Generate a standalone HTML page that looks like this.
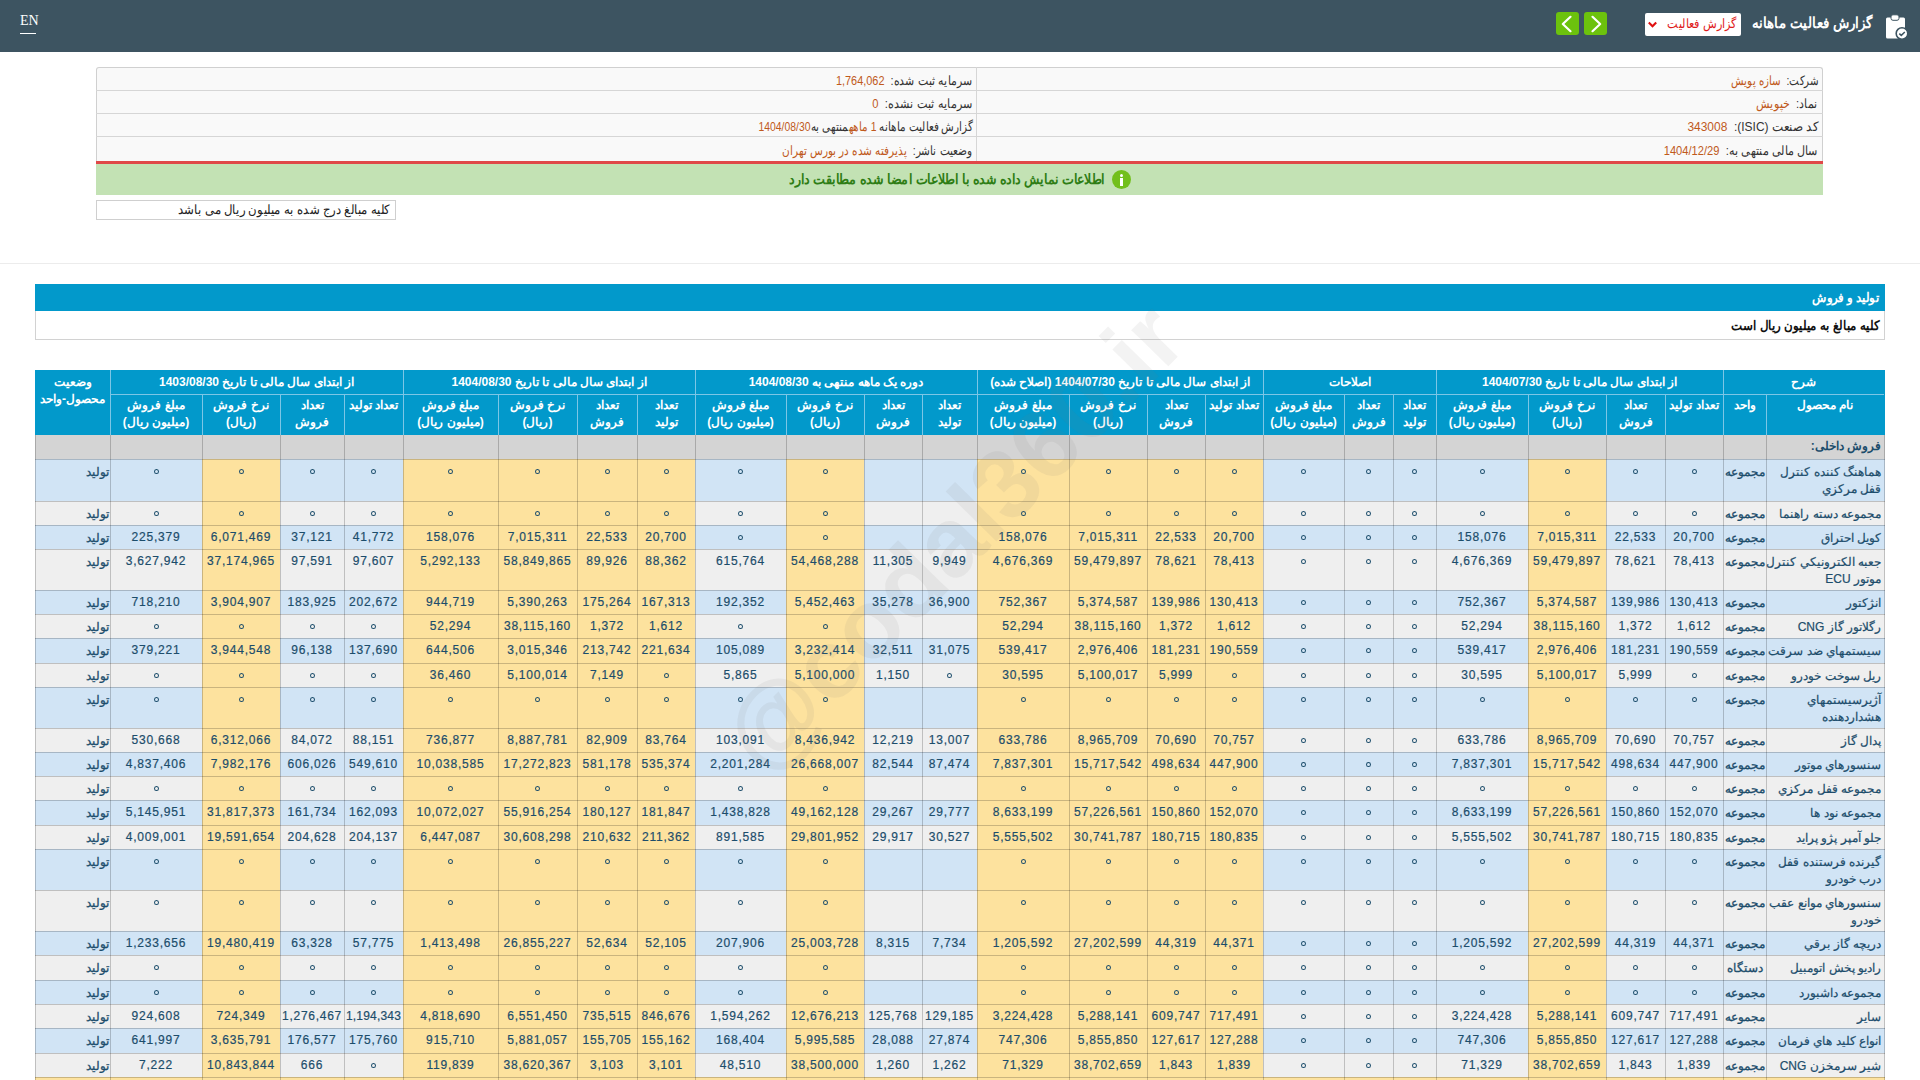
<!DOCTYPE html>
<html lang="fa"><head><meta charset="utf-8">
<style>
html,body{margin:0;padding:0;width:1920px;height:1080px;overflow:hidden;background:#fff;}
body{position:relative;font-family:"Liberation Sans",sans-serif;font-size:12px;color:#333;}
div{position:absolute;white-space:nowrap;}
.r{direction:rtl}
.f{display:inline-block;transform-origin:100% 50%;white-space:nowrap}
.f.c{transform-origin:50% 50%}
</style></head><body>
<div class="r" style="left:0;top:0;width:1920px;height:1080px">
<div style="left:0;top:0;width:1920px;height:52px;background:#3d5461"></div>
<div style="left:20px;top:12px;font-family:'Liberation Serif',serif;font-size:14px;color:#fff;line-height:18px">EN</div>
<div style="left:20px;top:33px;width:16px;height:1px;background:#fff"></div>
<div style="left:1556px;top:12px;width:23px;height:23px;background:#6cc20d;border-radius:3px"><svg width="23" height="23" viewBox="0 0 23 23"><path d="M14.5 4.8 L6.8 12 L14.5 19.2" fill="none" stroke="#fff" stroke-width="2.2" stroke-linecap="round" stroke-linejoin="round"/></svg></div>
<div style="left:1584px;top:12px;width:23px;height:23px;background:#6cc20d;border-radius:3px"><svg width="23" height="23" viewBox="0 0 23 23"><path d="M8.5 4.8 L16.2 12 L8.5 19.2" fill="none" stroke="#fff" stroke-width="2.2" stroke-linecap="round" stroke-linejoin="round"/></svg></div>
<div style="left:1645px;top:13px;width:96px;height:23px;background:#fff;border-radius:2px"></div>
<div style="left:1647px;top:19px"><svg width="11" height="10" viewBox="0 0 11 10"><path d="M1.8 2.5 L5.5 6.3 L9.2 2.5" fill="none" stroke="#e01010" stroke-width="2.1"/></svg></div>
<div class="r" style="left:1662px;top:15px;width:74px;text-align:right;color:#e01b1b;font-size:12.5px;line-height:18px"><span class="f">گزارش فعالیت</span></div>
<div class="r" style="left:1740px;top:13px;width:132px;text-align:right;color:#fff;font-size:14.5px;font-weight:bold;line-height:20px"><span class="f">گزارش فعالیت ماهانه</span></div>
<div style="left:1884px;top:13px"><svg width="26" height="28" viewBox="0 0 26 28"><rect x="2" y="4.5" width="19" height="21" rx="1.5" fill="#fff"/><rect x="7" y="1.8" width="8" height="5.5" rx="2" fill="#fff" stroke="#3d5461" stroke-width="1"/><circle cx="18" cy="20.5" r="5.8" fill="#fff" stroke="#3d5461" stroke-width="1.6"/><path d="M15.3 20.6 L17.3 22.4 L20.8 19" fill="none" stroke="#3d5461" stroke-width="1.5"/></svg></div>
<div style="left:96px;top:67px;width:1727px;height:94px;background:#f9f9f9;border:1px solid #d0d0d0;border-bottom:none;border-radius:3px 3px 0 0;box-sizing:border-box"></div>
<div style="left:96px;top:90px;width:1727px;height:1px;background:#d6d6d6"></div>
<div style="left:96px;top:113px;width:1727px;height:1px;background:#d6d6d6"></div>
<div style="left:96px;top:136px;width:1727px;height:1px;background:#d6d6d6"></div>
<div style="left:976px;top:67px;width:1px;height:94px;background:#d6d6d6"></div>
<div class="r" style="left:980px;top:71.0px;width:838px;text-align:right;font-size:13px;line-height:20px"><span class="f">شرکت: &nbsp;<span style="color:#c05a1c">سازه پویش</span></span></div>
<div class="r" style="left:980px;top:94.2px;width:838px;text-align:right;font-size:13px;line-height:20px"><span class="f">نماد: &nbsp;<span style="color:#c05a1c">خپویش</span></span></div>
<div class="r" style="left:980px;top:117.4px;width:838px;text-align:right;font-size:13px;line-height:20px"><span class="f">کد صنعت (ISIC): &nbsp;<span style="color:#c05a1c">343008</span></span></div>
<div class="r" style="left:980px;top:140.6px;width:838px;text-align:right;font-size:13px;line-height:20px"><span class="f">سال مالی منتهی به: &nbsp;<span style="color:#c05a1c">1404/12/29</span></span></div>
<div class="r" style="left:100px;top:71.0px;width:872px;text-align:right;font-size:13px;line-height:20px"><span class="f">سرمایه ثبت شده: &nbsp;<span style="color:#c05a1c">1,764,062</span></span></div>
<div class="r" style="left:100px;top:94.2px;width:872px;text-align:right;font-size:13px;line-height:20px"><span class="f">سرمایه ثبت نشده: &nbsp;<span style="color:#c05a1c">0</span></span></div>
<div class="r" style="left:100px;top:117.4px;width:872px;text-align:right;font-size:13px;line-height:20px"><span class="f">گزارش فعالیت ماهانه <span style="color:#c05a1c">1 ماهه</span>منتهی به<span style="color:#c05a1c">1404/08/30</span></span></div>
<div class="r" style="left:100px;top:140.6px;width:872px;text-align:right;font-size:13px;line-height:20px"><span class="f">وضعیت ناشر: &nbsp;<span style="color:#c05a1c">پذیرفته شده در بورس تهران</span></span></div>
<div style="left:96px;top:161px;width:1727px;height:3px;background:#e04848"></div>
<div style="left:96px;top:164px;width:1727px;height:31px;background:#c3e2b4"></div>
<div class="r" style="left:700px;top:169px;width:405px;text-align:right;color:#2e7d14;font-size:14px;font-weight:bold;line-height:20px"><span class="f">اطلاعات نمایش داده شده با اطلاعات امضا شده مطابقت دارد</span></div>
<div style="left:1112px;top:170px;width:19px;height:19px;border-radius:50%;background:#72bf1c"></div>
<div style="left:1120px;top:174px;width:3px;height:3px;background:#fff;border-radius:50%"></div>
<div style="left:1120px;top:178px;width:3px;height:8px;background:#fff"></div>
<div style="left:96px;top:200px;width:300px;height:20px;border:1px solid #cfcfcf;box-sizing:border-box"></div>
<div class="r" style="left:100px;top:200px;width:290px;text-align:right;font-size:13px;color:#222;line-height:20px"><span class="f">کلیه مبالغ درج شده به میلیون ریال می باشد</span></div>
<div style="left:0;top:263px;width:1920px;height:1px;background:#ececec"></div>
<div style="left:35px;top:284px;width:1850px;height:27px;background:#0299cb"></div>
<div class="r" style="left:40px;top:288px;width:1839px;text-align:right;color:#fff;font-weight:bold;font-size:13px;line-height:20px"><span class="f">تولید و فروش</span></div>
<div style="left:35px;top:311px;width:1850px;height:29px;border:1px solid #d2d2d2;border-top:none;box-sizing:border-box;background:#fff"></div>
<div class="r" style="left:40px;top:316px;width:1839px;text-align:right;color:#111;font-weight:bold;font-size:13px;line-height:20px"><span class="f">کلیه مبالغ به میلیون ریال است</span></div>
<div style="left:35px;top:370px;width:1850px;height:65px;background:#0299cb"></div>
<div style="left:35px;top:370px;width:75px;height:65px;color:#fff;font-weight:bold;text-align:center;line-height:17px;box-sizing:border-box;overflow:hidden;display:flex;flex-direction:column;align-items:center;padding-top:4px"><span class="f c">وضعیت</span><span class="f c">محصول-واحد</span></div>
<div style="left:110px;top:370px;width:293px;height:24px;color:#fff;font-weight:bold;text-align:center;line-height:17px;box-sizing:border-box;overflow:hidden;display:flex;flex-direction:column;align-items:center;padding-top:4px"><span class="f c">از ابتدای سال مالی تا تاریخ 1403/08/30</span></div>
<div style="left:403px;top:370px;width:292px;height:24px;color:#fff;font-weight:bold;text-align:center;line-height:17px;box-sizing:border-box;overflow:hidden;display:flex;flex-direction:column;align-items:center;padding-top:4px"><span class="f c">از ابتدای سال مالی تا تاریخ 1404/08/30</span></div>
<div style="left:695px;top:370px;width:282px;height:24px;color:#fff;font-weight:bold;text-align:center;line-height:17px;box-sizing:border-box;overflow:hidden;display:flex;flex-direction:column;align-items:center;padding-top:4px"><span class="f c">دوره یک ماهه منتهی به 1404/08/30</span></div>
<div style="left:977px;top:370px;width:286px;height:24px;color:#fff;font-weight:bold;text-align:center;line-height:17px;box-sizing:border-box;overflow:hidden;display:flex;flex-direction:column;align-items:center;padding-top:4px"><span class="f c">از ابتدای سال مالی تا تاریخ 1404/07/30 (اصلاح شده)</span></div>
<div style="left:1263px;top:370px;width:173px;height:24px;color:#fff;font-weight:bold;text-align:center;line-height:17px;box-sizing:border-box;overflow:hidden;display:flex;flex-direction:column;align-items:center;padding-top:4px"><span class="f c">اصلاحات</span></div>
<div style="left:1436px;top:370px;width:287px;height:24px;color:#fff;font-weight:bold;text-align:center;line-height:17px;box-sizing:border-box;overflow:hidden;display:flex;flex-direction:column;align-items:center;padding-top:4px"><span class="f c">از ابتدای سال مالی تا تاریخ 1404/07/30</span></div>
<div style="left:1723px;top:370px;width:161px;height:24px;color:#fff;font-weight:bold;text-align:center;line-height:17px;box-sizing:border-box;overflow:hidden;display:flex;flex-direction:column;align-items:center;padding-top:4px"><span class="f c">شرح</span></div>
<div style="left:110px;top:394px;width:92px;height:41px;color:#fff;font-weight:bold;text-align:center;line-height:17px;box-sizing:border-box;overflow:hidden;display:flex;flex-direction:column;align-items:center;padding-top:3px"><span class="f c">مبلغ فروش</span><span class="f c">(میلیون ریال)</span></div>
<div style="left:202px;top:394px;width:78px;height:41px;color:#fff;font-weight:bold;text-align:center;line-height:17px;box-sizing:border-box;overflow:hidden;display:flex;flex-direction:column;align-items:center;padding-top:3px"><span class="f c">نرخ فروش</span><span class="f c">(ریال)</span></div>
<div style="left:280px;top:394px;width:64px;height:41px;color:#fff;font-weight:bold;text-align:center;line-height:17px;box-sizing:border-box;overflow:hidden;display:flex;flex-direction:column;align-items:center;padding-top:3px"><span class="f c">تعداد</span><span class="f c">فروش</span></div>
<div style="left:344px;top:394px;width:59px;height:41px;color:#fff;font-weight:bold;text-align:center;line-height:17px;box-sizing:border-box;overflow:hidden;display:flex;flex-direction:column;align-items:center;padding-top:3px"><span class="f c">تعداد تولید</span></div>
<div style="left:403px;top:394px;width:95px;height:41px;color:#fff;font-weight:bold;text-align:center;line-height:17px;box-sizing:border-box;overflow:hidden;display:flex;flex-direction:column;align-items:center;padding-top:3px"><span class="f c">مبلغ فروش</span><span class="f c">(میلیون ریال)</span></div>
<div style="left:498px;top:394px;width:79px;height:41px;color:#fff;font-weight:bold;text-align:center;line-height:17px;box-sizing:border-box;overflow:hidden;display:flex;flex-direction:column;align-items:center;padding-top:3px"><span class="f c">نرخ فروش</span><span class="f c">(ریال)</span></div>
<div style="left:577px;top:394px;width:60px;height:41px;color:#fff;font-weight:bold;text-align:center;line-height:17px;box-sizing:border-box;overflow:hidden;display:flex;flex-direction:column;align-items:center;padding-top:3px"><span class="f c">تعداد</span><span class="f c">فروش</span></div>
<div style="left:637px;top:394px;width:58px;height:41px;color:#fff;font-weight:bold;text-align:center;line-height:17px;box-sizing:border-box;overflow:hidden;display:flex;flex-direction:column;align-items:center;padding-top:3px"><span class="f c">تعداد</span><span class="f c">تولید</span></div>
<div style="left:695px;top:394px;width:91px;height:41px;color:#fff;font-weight:bold;text-align:center;line-height:17px;box-sizing:border-box;overflow:hidden;display:flex;flex-direction:column;align-items:center;padding-top:3px"><span class="f c">مبلغ فروش</span><span class="f c">(میلیون ریال)</span></div>
<div style="left:786px;top:394px;width:78px;height:41px;color:#fff;font-weight:bold;text-align:center;line-height:17px;box-sizing:border-box;overflow:hidden;display:flex;flex-direction:column;align-items:center;padding-top:3px"><span class="f c">نرخ فروش</span><span class="f c">(ریال)</span></div>
<div style="left:864px;top:394px;width:58px;height:41px;color:#fff;font-weight:bold;text-align:center;line-height:17px;box-sizing:border-box;overflow:hidden;display:flex;flex-direction:column;align-items:center;padding-top:3px"><span class="f c">تعداد</span><span class="f c">فروش</span></div>
<div style="left:922px;top:394px;width:55px;height:41px;color:#fff;font-weight:bold;text-align:center;line-height:17px;box-sizing:border-box;overflow:hidden;display:flex;flex-direction:column;align-items:center;padding-top:3px"><span class="f c">تعداد</span><span class="f c">تولید</span></div>
<div style="left:977px;top:394px;width:92px;height:41px;color:#fff;font-weight:bold;text-align:center;line-height:17px;box-sizing:border-box;overflow:hidden;display:flex;flex-direction:column;align-items:center;padding-top:3px"><span class="f c">مبلغ فروش</span><span class="f c">(میلیون ریال)</span></div>
<div style="left:1069px;top:394px;width:78px;height:41px;color:#fff;font-weight:bold;text-align:center;line-height:17px;box-sizing:border-box;overflow:hidden;display:flex;flex-direction:column;align-items:center;padding-top:3px"><span class="f c">نرخ فروش</span><span class="f c">(ریال)</span></div>
<div style="left:1147px;top:394px;width:58px;height:41px;color:#fff;font-weight:bold;text-align:center;line-height:17px;box-sizing:border-box;overflow:hidden;display:flex;flex-direction:column;align-items:center;padding-top:3px"><span class="f c">تعداد</span><span class="f c">فروش</span></div>
<div style="left:1205px;top:394px;width:58px;height:41px;color:#fff;font-weight:bold;text-align:center;line-height:17px;box-sizing:border-box;overflow:hidden;display:flex;flex-direction:column;align-items:center;padding-top:3px"><span class="f c">تعداد تولید</span></div>
<div style="left:1263px;top:394px;width:81px;height:41px;color:#fff;font-weight:bold;text-align:center;line-height:17px;box-sizing:border-box;overflow:hidden;display:flex;flex-direction:column;align-items:center;padding-top:3px"><span class="f c">مبلغ فروش</span><span class="f c">(میلیون ریال)</span></div>
<div style="left:1344px;top:394px;width:49px;height:41px;color:#fff;font-weight:bold;text-align:center;line-height:17px;box-sizing:border-box;overflow:hidden;display:flex;flex-direction:column;align-items:center;padding-top:3px"><span class="f c">تعداد</span><span class="f c">فروش</span></div>
<div style="left:1393px;top:394px;width:43px;height:41px;color:#fff;font-weight:bold;text-align:center;line-height:17px;box-sizing:border-box;overflow:hidden;display:flex;flex-direction:column;align-items:center;padding-top:3px"><span class="f c">تعداد</span><span class="f c">تولید</span></div>
<div style="left:1436px;top:394px;width:92px;height:41px;color:#fff;font-weight:bold;text-align:center;line-height:17px;box-sizing:border-box;overflow:hidden;display:flex;flex-direction:column;align-items:center;padding-top:3px"><span class="f c">مبلغ فروش</span><span class="f c">(میلیون ریال)</span></div>
<div style="left:1528px;top:394px;width:78px;height:41px;color:#fff;font-weight:bold;text-align:center;line-height:17px;box-sizing:border-box;overflow:hidden;display:flex;flex-direction:column;align-items:center;padding-top:3px"><span class="f c">نرخ فروش</span><span class="f c">(ریال)</span></div>
<div style="left:1606px;top:394px;width:59px;height:41px;color:#fff;font-weight:bold;text-align:center;line-height:17px;box-sizing:border-box;overflow:hidden;display:flex;flex-direction:column;align-items:center;padding-top:3px"><span class="f c">تعداد</span><span class="f c">فروش</span></div>
<div style="left:1665px;top:394px;width:58px;height:41px;color:#fff;font-weight:bold;text-align:center;line-height:17px;box-sizing:border-box;overflow:hidden;display:flex;flex-direction:column;align-items:center;padding-top:3px"><span class="f c">تعداد تولید</span></div>
<div style="left:1723px;top:394px;width:43px;height:41px;color:#fff;font-weight:bold;text-align:center;line-height:17px;box-sizing:border-box;overflow:hidden;display:flex;flex-direction:column;align-items:center;padding-top:3px"><span class="f c">واحد</span></div>
<div style="left:1766px;top:394px;width:118px;height:41px;color:#fff;font-weight:bold;text-align:center;line-height:17px;box-sizing:border-box;overflow:hidden;display:flex;flex-direction:column;align-items:center;padding-top:3px"><span class="f c">نام محصول</span></div>
<div style="left:110px;top:394px;width:1774px;height:1px;background:#7cc6e6"></div>
<div style="left:110px;top:370px;width:1px;height:65px;background:#7cc6e6"></div>
<div style="left:202px;top:394px;width:1px;height:41px;background:#7cc6e6"></div>
<div style="left:280px;top:394px;width:1px;height:41px;background:#7cc6e6"></div>
<div style="left:344px;top:394px;width:1px;height:41px;background:#7cc6e6"></div>
<div style="left:403px;top:370px;width:1px;height:65px;background:#7cc6e6"></div>
<div style="left:498px;top:394px;width:1px;height:41px;background:#7cc6e6"></div>
<div style="left:577px;top:394px;width:1px;height:41px;background:#7cc6e6"></div>
<div style="left:637px;top:394px;width:1px;height:41px;background:#7cc6e6"></div>
<div style="left:695px;top:370px;width:1px;height:65px;background:#7cc6e6"></div>
<div style="left:786px;top:394px;width:1px;height:41px;background:#7cc6e6"></div>
<div style="left:864px;top:394px;width:1px;height:41px;background:#7cc6e6"></div>
<div style="left:922px;top:394px;width:1px;height:41px;background:#7cc6e6"></div>
<div style="left:977px;top:370px;width:1px;height:65px;background:#7cc6e6"></div>
<div style="left:1069px;top:394px;width:1px;height:41px;background:#7cc6e6"></div>
<div style="left:1147px;top:394px;width:1px;height:41px;background:#7cc6e6"></div>
<div style="left:1205px;top:394px;width:1px;height:41px;background:#7cc6e6"></div>
<div style="left:1263px;top:370px;width:1px;height:65px;background:#7cc6e6"></div>
<div style="left:1344px;top:394px;width:1px;height:41px;background:#7cc6e6"></div>
<div style="left:1393px;top:394px;width:1px;height:41px;background:#7cc6e6"></div>
<div style="left:1436px;top:370px;width:1px;height:65px;background:#7cc6e6"></div>
<div style="left:1528px;top:394px;width:1px;height:41px;background:#7cc6e6"></div>
<div style="left:1606px;top:394px;width:1px;height:41px;background:#7cc6e6"></div>
<div style="left:1665px;top:394px;width:1px;height:41px;background:#7cc6e6"></div>
<div style="left:1723px;top:370px;width:1px;height:65px;background:#7cc6e6"></div>
<div style="left:1766px;top:394px;width:1px;height:41px;background:#7cc6e6"></div>
<div style="left:35px;top:435px;width:1850px;height:24px;background:#d4d4d4"></div>
<div style="left:1766px;top:435px;width:118px;height:24px;color:#1c4d6b;font-weight:bold;text-align:right;padding:3px 3px 0 0;line-height:17px;box-sizing:border-box;overflow:hidden"><span class="f">فروش داخلی:</span></div>
<div style="left:35px;top:459px;width:1850px;height:42px;background:#d1e4f5"></div>
<div style="left:202px;top:459px;width:78px;height:42px;background:#fde29e"></div>
<div style="left:403px;top:459px;width:95px;height:42px;background:#fde29e"></div>
<div style="left:498px;top:459px;width:79px;height:42px;background:#fde29e"></div>
<div style="left:577px;top:459px;width:60px;height:42px;background:#fde29e"></div>
<div style="left:637px;top:459px;width:58px;height:42px;background:#fde29e"></div>
<div style="left:786px;top:459px;width:78px;height:42px;background:#fde29e"></div>
<div style="left:977px;top:459px;width:92px;height:42px;background:#fde29e"></div>
<div style="left:1069px;top:459px;width:78px;height:42px;background:#fde29e"></div>
<div style="left:1147px;top:459px;width:58px;height:42px;background:#fde29e"></div>
<div style="left:1205px;top:459px;width:58px;height:42px;background:#fde29e"></div>
<div style="left:1528px;top:459px;width:78px;height:42px;background:#fde29e"></div>
<div style="left:35px;top:459px;width:75px;height:42px;color:#1c4d6b;line-height:17px;box-sizing:border-box;overflow:hidden;text-align:right;padding:5px 1px 0 0;-webkit-text-stroke:0.3px #1c4d6b"><span class="f">تولید</span></div>
<div style="left:153.8px;top:468.6px;width:5px;height:5.2px;border:1.7px solid #1c4d6b;border-radius:50%;box-sizing:border-box"></div>
<div style="left:238.8px;top:468.6px;width:5px;height:5.2px;border:1.7px solid #1c4d6b;border-radius:50%;box-sizing:border-box"></div>
<div style="left:309.8px;top:468.6px;width:5px;height:5.2px;border:1.7px solid #1c4d6b;border-radius:50%;box-sizing:border-box"></div>
<div style="left:371.3px;top:468.6px;width:5px;height:5.2px;border:1.7px solid #1c4d6b;border-radius:50%;box-sizing:border-box"></div>
<div style="left:448.3px;top:468.6px;width:5px;height:5.2px;border:1.7px solid #1c4d6b;border-radius:50%;box-sizing:border-box"></div>
<div style="left:535.3px;top:468.6px;width:5px;height:5.2px;border:1.7px solid #1c4d6b;border-radius:50%;box-sizing:border-box"></div>
<div style="left:604.8px;top:468.6px;width:5px;height:5.2px;border:1.7px solid #1c4d6b;border-radius:50%;box-sizing:border-box"></div>
<div style="left:663.8px;top:468.6px;width:5px;height:5.2px;border:1.7px solid #1c4d6b;border-radius:50%;box-sizing:border-box"></div>
<div style="left:738.3px;top:468.6px;width:5px;height:5.2px;border:1.7px solid #1c4d6b;border-radius:50%;box-sizing:border-box"></div>
<div style="left:822.8px;top:468.6px;width:5px;height:5.2px;border:1.7px solid #1c4d6b;border-radius:50%;box-sizing:border-box"></div>
<div style="left:1020.8px;top:468.6px;width:5px;height:5.2px;border:1.7px solid #1c4d6b;border-radius:50%;box-sizing:border-box"></div>
<div style="left:1105.8px;top:468.6px;width:5px;height:5.2px;border:1.7px solid #1c4d6b;border-radius:50%;box-sizing:border-box"></div>
<div style="left:1173.8px;top:468.6px;width:5px;height:5.2px;border:1.7px solid #1c4d6b;border-radius:50%;box-sizing:border-box"></div>
<div style="left:1231.8px;top:468.6px;width:5px;height:5.2px;border:1.7px solid #1c4d6b;border-radius:50%;box-sizing:border-box"></div>
<div style="left:1301.3px;top:468.6px;width:5px;height:5.2px;border:1.7px solid #1c4d6b;border-radius:50%;box-sizing:border-box"></div>
<div style="left:1366.3px;top:468.6px;width:5px;height:5.2px;border:1.7px solid #1c4d6b;border-radius:50%;box-sizing:border-box"></div>
<div style="left:1412.3px;top:468.6px;width:5px;height:5.2px;border:1.7px solid #1c4d6b;border-radius:50%;box-sizing:border-box"></div>
<div style="left:1479.8px;top:468.6px;width:5px;height:5.2px;border:1.7px solid #1c4d6b;border-radius:50%;box-sizing:border-box"></div>
<div style="left:1564.8px;top:468.6px;width:5px;height:5.2px;border:1.7px solid #1c4d6b;border-radius:50%;box-sizing:border-box"></div>
<div style="left:1633.3px;top:468.6px;width:5px;height:5.2px;border:1.7px solid #1c4d6b;border-radius:50%;box-sizing:border-box"></div>
<div style="left:1691.8px;top:468.6px;width:5px;height:5.2px;border:1.7px solid #1c4d6b;border-radius:50%;box-sizing:border-box"></div>
<div style="left:1723px;top:459px;width:43px;height:42px;color:#1c4d6b;line-height:17px;box-sizing:border-box;overflow:hidden;text-align:center;padding-top:5px;-webkit-text-stroke:0.3px #1c4d6b;display:flex;flex-direction:column;align-items:center"><span class="f c">مجموعه</span></div>
<div style="left:1766px;top:459px;width:118px;height:42px;color:#1c4d6b;line-height:17px;box-sizing:border-box;overflow:hidden;text-align:right;padding:5px 3px 0 0;-webkit-text-stroke:0.2px #1c4d6b"><span class="f">هماهنگ کننده کنترل</span><br><span class="f">قفل مرکزي</span></div>
<div style="left:35px;top:501px;width:1850px;height:24px;background:#efefef"></div>
<div style="left:202px;top:501px;width:78px;height:24px;background:#fde29e"></div>
<div style="left:403px;top:501px;width:95px;height:24px;background:#fde29e"></div>
<div style="left:498px;top:501px;width:79px;height:24px;background:#fde29e"></div>
<div style="left:577px;top:501px;width:60px;height:24px;background:#fde29e"></div>
<div style="left:637px;top:501px;width:58px;height:24px;background:#fde29e"></div>
<div style="left:786px;top:501px;width:78px;height:24px;background:#fde29e"></div>
<div style="left:977px;top:501px;width:92px;height:24px;background:#fde29e"></div>
<div style="left:1069px;top:501px;width:78px;height:24px;background:#fde29e"></div>
<div style="left:1147px;top:501px;width:58px;height:24px;background:#fde29e"></div>
<div style="left:1205px;top:501px;width:58px;height:24px;background:#fde29e"></div>
<div style="left:1528px;top:501px;width:78px;height:24px;background:#fde29e"></div>
<div style="left:35px;top:501px;width:75px;height:24px;color:#1c4d6b;line-height:17px;box-sizing:border-box;overflow:hidden;text-align:right;padding:5px 1px 0 0;-webkit-text-stroke:0.3px #1c4d6b"><span class="f">تولید</span></div>
<div style="left:153.8px;top:510.6px;width:5px;height:5.2px;border:1.7px solid #1c4d6b;border-radius:50%;box-sizing:border-box"></div>
<div style="left:238.8px;top:510.6px;width:5px;height:5.2px;border:1.7px solid #1c4d6b;border-radius:50%;box-sizing:border-box"></div>
<div style="left:309.8px;top:510.6px;width:5px;height:5.2px;border:1.7px solid #1c4d6b;border-radius:50%;box-sizing:border-box"></div>
<div style="left:371.3px;top:510.6px;width:5px;height:5.2px;border:1.7px solid #1c4d6b;border-radius:50%;box-sizing:border-box"></div>
<div style="left:448.3px;top:510.6px;width:5px;height:5.2px;border:1.7px solid #1c4d6b;border-radius:50%;box-sizing:border-box"></div>
<div style="left:535.3px;top:510.6px;width:5px;height:5.2px;border:1.7px solid #1c4d6b;border-radius:50%;box-sizing:border-box"></div>
<div style="left:604.8px;top:510.6px;width:5px;height:5.2px;border:1.7px solid #1c4d6b;border-radius:50%;box-sizing:border-box"></div>
<div style="left:663.8px;top:510.6px;width:5px;height:5.2px;border:1.7px solid #1c4d6b;border-radius:50%;box-sizing:border-box"></div>
<div style="left:738.3px;top:510.6px;width:5px;height:5.2px;border:1.7px solid #1c4d6b;border-radius:50%;box-sizing:border-box"></div>
<div style="left:822.8px;top:510.6px;width:5px;height:5.2px;border:1.7px solid #1c4d6b;border-radius:50%;box-sizing:border-box"></div>
<div style="left:1020.8px;top:510.6px;width:5px;height:5.2px;border:1.7px solid #1c4d6b;border-radius:50%;box-sizing:border-box"></div>
<div style="left:1105.8px;top:510.6px;width:5px;height:5.2px;border:1.7px solid #1c4d6b;border-radius:50%;box-sizing:border-box"></div>
<div style="left:1173.8px;top:510.6px;width:5px;height:5.2px;border:1.7px solid #1c4d6b;border-radius:50%;box-sizing:border-box"></div>
<div style="left:1231.8px;top:510.6px;width:5px;height:5.2px;border:1.7px solid #1c4d6b;border-radius:50%;box-sizing:border-box"></div>
<div style="left:1301.3px;top:510.6px;width:5px;height:5.2px;border:1.7px solid #1c4d6b;border-radius:50%;box-sizing:border-box"></div>
<div style="left:1366.3px;top:510.6px;width:5px;height:5.2px;border:1.7px solid #1c4d6b;border-radius:50%;box-sizing:border-box"></div>
<div style="left:1412.3px;top:510.6px;width:5px;height:5.2px;border:1.7px solid #1c4d6b;border-radius:50%;box-sizing:border-box"></div>
<div style="left:1479.8px;top:510.6px;width:5px;height:5.2px;border:1.7px solid #1c4d6b;border-radius:50%;box-sizing:border-box"></div>
<div style="left:1564.8px;top:510.6px;width:5px;height:5.2px;border:1.7px solid #1c4d6b;border-radius:50%;box-sizing:border-box"></div>
<div style="left:1633.3px;top:510.6px;width:5px;height:5.2px;border:1.7px solid #1c4d6b;border-radius:50%;box-sizing:border-box"></div>
<div style="left:1691.8px;top:510.6px;width:5px;height:5.2px;border:1.7px solid #1c4d6b;border-radius:50%;box-sizing:border-box"></div>
<div style="left:1723px;top:501px;width:43px;height:24px;color:#1c4d6b;line-height:17px;box-sizing:border-box;overflow:hidden;text-align:center;padding-top:5px;-webkit-text-stroke:0.3px #1c4d6b;display:flex;flex-direction:column;align-items:center"><span class="f c">مجموعه</span></div>
<div style="left:1766px;top:501px;width:118px;height:24px;color:#1c4d6b;line-height:17px;box-sizing:border-box;overflow:hidden;text-align:right;padding:5px 3px 0 0;-webkit-text-stroke:0.2px #1c4d6b"><span class="f">مجموعه دسته راهنما</span></div>
<div style="left:35px;top:525px;width:1850px;height:24px;background:#d1e4f5"></div>
<div style="left:202px;top:525px;width:78px;height:24px;background:#fde29e"></div>
<div style="left:403px;top:525px;width:95px;height:24px;background:#fde29e"></div>
<div style="left:498px;top:525px;width:79px;height:24px;background:#fde29e"></div>
<div style="left:577px;top:525px;width:60px;height:24px;background:#fde29e"></div>
<div style="left:637px;top:525px;width:58px;height:24px;background:#fde29e"></div>
<div style="left:786px;top:525px;width:78px;height:24px;background:#fde29e"></div>
<div style="left:977px;top:525px;width:92px;height:24px;background:#fde29e"></div>
<div style="left:1069px;top:525px;width:78px;height:24px;background:#fde29e"></div>
<div style="left:1147px;top:525px;width:58px;height:24px;background:#fde29e"></div>
<div style="left:1205px;top:525px;width:58px;height:24px;background:#fde29e"></div>
<div style="left:1528px;top:525px;width:78px;height:24px;background:#fde29e"></div>
<div style="left:35px;top:525px;width:75px;height:24px;color:#1c4d6b;line-height:17px;box-sizing:border-box;overflow:hidden;text-align:right;padding:5px 1px 0 0;-webkit-text-stroke:0.3px #1c4d6b"><span class="f">تولید</span></div>
<div style="left:110px;top:525px;width:92px;height:24px;color:#1c4d6b;line-height:17px;box-sizing:border-box;overflow:hidden;text-align:center;padding-top:4px;font-size:12px;-webkit-text-stroke:0.2px #1c4d6b;letter-spacing:0.80px;display:flex;justify-content:center">225,379</div>
<div style="left:202px;top:525px;width:78px;height:24px;color:#1c4d6b;line-height:17px;box-sizing:border-box;overflow:hidden;text-align:center;padding-top:4px;font-size:12px;-webkit-text-stroke:0.2px #1c4d6b;letter-spacing:0.80px;display:flex;justify-content:center">6,071,469</div>
<div style="left:280px;top:525px;width:64px;height:24px;color:#1c4d6b;line-height:17px;box-sizing:border-box;overflow:hidden;text-align:center;padding-top:4px;font-size:12px;-webkit-text-stroke:0.2px #1c4d6b;letter-spacing:0.80px;display:flex;justify-content:center">37,121</div>
<div style="left:344px;top:525px;width:59px;height:24px;color:#1c4d6b;line-height:17px;box-sizing:border-box;overflow:hidden;text-align:center;padding-top:4px;font-size:12px;-webkit-text-stroke:0.2px #1c4d6b;letter-spacing:0.80px;display:flex;justify-content:center">41,772</div>
<div style="left:403px;top:525px;width:95px;height:24px;color:#1c4d6b;line-height:17px;box-sizing:border-box;overflow:hidden;text-align:center;padding-top:4px;font-size:12px;-webkit-text-stroke:0.2px #1c4d6b;letter-spacing:0.80px;display:flex;justify-content:center">158,076</div>
<div style="left:498px;top:525px;width:79px;height:24px;color:#1c4d6b;line-height:17px;box-sizing:border-box;overflow:hidden;text-align:center;padding-top:4px;font-size:12px;-webkit-text-stroke:0.2px #1c4d6b;letter-spacing:0.80px;display:flex;justify-content:center">7,015,311</div>
<div style="left:577px;top:525px;width:60px;height:24px;color:#1c4d6b;line-height:17px;box-sizing:border-box;overflow:hidden;text-align:center;padding-top:4px;font-size:12px;-webkit-text-stroke:0.2px #1c4d6b;letter-spacing:0.80px;display:flex;justify-content:center">22,533</div>
<div style="left:637px;top:525px;width:58px;height:24px;color:#1c4d6b;line-height:17px;box-sizing:border-box;overflow:hidden;text-align:center;padding-top:4px;font-size:12px;-webkit-text-stroke:0.2px #1c4d6b;letter-spacing:0.80px;display:flex;justify-content:center">20,700</div>
<div style="left:738.3px;top:534.6px;width:5px;height:5.2px;border:1.7px solid #1c4d6b;border-radius:50%;box-sizing:border-box"></div>
<div style="left:822.8px;top:534.6px;width:5px;height:5.2px;border:1.7px solid #1c4d6b;border-radius:50%;box-sizing:border-box"></div>
<div style="left:977px;top:525px;width:92px;height:24px;color:#1c4d6b;line-height:17px;box-sizing:border-box;overflow:hidden;text-align:center;padding-top:4px;font-size:12px;-webkit-text-stroke:0.2px #1c4d6b;letter-spacing:0.80px;display:flex;justify-content:center">158,076</div>
<div style="left:1069px;top:525px;width:78px;height:24px;color:#1c4d6b;line-height:17px;box-sizing:border-box;overflow:hidden;text-align:center;padding-top:4px;font-size:12px;-webkit-text-stroke:0.2px #1c4d6b;letter-spacing:0.80px;display:flex;justify-content:center">7,015,311</div>
<div style="left:1147px;top:525px;width:58px;height:24px;color:#1c4d6b;line-height:17px;box-sizing:border-box;overflow:hidden;text-align:center;padding-top:4px;font-size:12px;-webkit-text-stroke:0.2px #1c4d6b;letter-spacing:0.80px;display:flex;justify-content:center">22,533</div>
<div style="left:1205px;top:525px;width:58px;height:24px;color:#1c4d6b;line-height:17px;box-sizing:border-box;overflow:hidden;text-align:center;padding-top:4px;font-size:12px;-webkit-text-stroke:0.2px #1c4d6b;letter-spacing:0.80px;display:flex;justify-content:center">20,700</div>
<div style="left:1301.3px;top:534.6px;width:5px;height:5.2px;border:1.7px solid #1c4d6b;border-radius:50%;box-sizing:border-box"></div>
<div style="left:1366.3px;top:534.6px;width:5px;height:5.2px;border:1.7px solid #1c4d6b;border-radius:50%;box-sizing:border-box"></div>
<div style="left:1412.3px;top:534.6px;width:5px;height:5.2px;border:1.7px solid #1c4d6b;border-radius:50%;box-sizing:border-box"></div>
<div style="left:1436px;top:525px;width:92px;height:24px;color:#1c4d6b;line-height:17px;box-sizing:border-box;overflow:hidden;text-align:center;padding-top:4px;font-size:12px;-webkit-text-stroke:0.2px #1c4d6b;letter-spacing:0.80px;display:flex;justify-content:center">158,076</div>
<div style="left:1528px;top:525px;width:78px;height:24px;color:#1c4d6b;line-height:17px;box-sizing:border-box;overflow:hidden;text-align:center;padding-top:4px;font-size:12px;-webkit-text-stroke:0.2px #1c4d6b;letter-spacing:0.80px;display:flex;justify-content:center">7,015,311</div>
<div style="left:1606px;top:525px;width:59px;height:24px;color:#1c4d6b;line-height:17px;box-sizing:border-box;overflow:hidden;text-align:center;padding-top:4px;font-size:12px;-webkit-text-stroke:0.2px #1c4d6b;letter-spacing:0.80px;display:flex;justify-content:center">22,533</div>
<div style="left:1665px;top:525px;width:58px;height:24px;color:#1c4d6b;line-height:17px;box-sizing:border-box;overflow:hidden;text-align:center;padding-top:4px;font-size:12px;-webkit-text-stroke:0.2px #1c4d6b;letter-spacing:0.80px;display:flex;justify-content:center">20,700</div>
<div style="left:1723px;top:525px;width:43px;height:24px;color:#1c4d6b;line-height:17px;box-sizing:border-box;overflow:hidden;text-align:center;padding-top:5px;-webkit-text-stroke:0.3px #1c4d6b;display:flex;flex-direction:column;align-items:center"><span class="f c">مجموعه</span></div>
<div style="left:1766px;top:525px;width:118px;height:24px;color:#1c4d6b;line-height:17px;box-sizing:border-box;overflow:hidden;text-align:right;padding:5px 3px 0 0;-webkit-text-stroke:0.2px #1c4d6b"><span class="f">کویل احتراق</span></div>
<div style="left:35px;top:549px;width:1850px;height:41px;background:#efefef"></div>
<div style="left:202px;top:549px;width:78px;height:41px;background:#fde29e"></div>
<div style="left:403px;top:549px;width:95px;height:41px;background:#fde29e"></div>
<div style="left:498px;top:549px;width:79px;height:41px;background:#fde29e"></div>
<div style="left:577px;top:549px;width:60px;height:41px;background:#fde29e"></div>
<div style="left:637px;top:549px;width:58px;height:41px;background:#fde29e"></div>
<div style="left:786px;top:549px;width:78px;height:41px;background:#fde29e"></div>
<div style="left:977px;top:549px;width:92px;height:41px;background:#fde29e"></div>
<div style="left:1069px;top:549px;width:78px;height:41px;background:#fde29e"></div>
<div style="left:1147px;top:549px;width:58px;height:41px;background:#fde29e"></div>
<div style="left:1205px;top:549px;width:58px;height:41px;background:#fde29e"></div>
<div style="left:1528px;top:549px;width:78px;height:41px;background:#fde29e"></div>
<div style="left:35px;top:549px;width:75px;height:41px;color:#1c4d6b;line-height:17px;box-sizing:border-box;overflow:hidden;text-align:right;padding:5px 1px 0 0;-webkit-text-stroke:0.3px #1c4d6b"><span class="f">تولید</span></div>
<div style="left:110px;top:549px;width:92px;height:41px;color:#1c4d6b;line-height:17px;box-sizing:border-box;overflow:hidden;text-align:center;padding-top:4px;font-size:12px;-webkit-text-stroke:0.2px #1c4d6b;letter-spacing:0.80px;display:flex;justify-content:center">3,627,942</div>
<div style="left:202px;top:549px;width:78px;height:41px;color:#1c4d6b;line-height:17px;box-sizing:border-box;overflow:hidden;text-align:center;padding-top:4px;font-size:12px;-webkit-text-stroke:0.2px #1c4d6b;letter-spacing:0.80px;display:flex;justify-content:center">37,174,965</div>
<div style="left:280px;top:549px;width:64px;height:41px;color:#1c4d6b;line-height:17px;box-sizing:border-box;overflow:hidden;text-align:center;padding-top:4px;font-size:12px;-webkit-text-stroke:0.2px #1c4d6b;letter-spacing:0.80px;display:flex;justify-content:center">97,591</div>
<div style="left:344px;top:549px;width:59px;height:41px;color:#1c4d6b;line-height:17px;box-sizing:border-box;overflow:hidden;text-align:center;padding-top:4px;font-size:12px;-webkit-text-stroke:0.2px #1c4d6b;letter-spacing:0.80px;display:flex;justify-content:center">97,607</div>
<div style="left:403px;top:549px;width:95px;height:41px;color:#1c4d6b;line-height:17px;box-sizing:border-box;overflow:hidden;text-align:center;padding-top:4px;font-size:12px;-webkit-text-stroke:0.2px #1c4d6b;letter-spacing:0.80px;display:flex;justify-content:center">5,292,133</div>
<div style="left:498px;top:549px;width:79px;height:41px;color:#1c4d6b;line-height:17px;box-sizing:border-box;overflow:hidden;text-align:center;padding-top:4px;font-size:12px;-webkit-text-stroke:0.2px #1c4d6b;letter-spacing:0.80px;display:flex;justify-content:center">58,849,865</div>
<div style="left:577px;top:549px;width:60px;height:41px;color:#1c4d6b;line-height:17px;box-sizing:border-box;overflow:hidden;text-align:center;padding-top:4px;font-size:12px;-webkit-text-stroke:0.2px #1c4d6b;letter-spacing:0.80px;display:flex;justify-content:center">89,926</div>
<div style="left:637px;top:549px;width:58px;height:41px;color:#1c4d6b;line-height:17px;box-sizing:border-box;overflow:hidden;text-align:center;padding-top:4px;font-size:12px;-webkit-text-stroke:0.2px #1c4d6b;letter-spacing:0.80px;display:flex;justify-content:center">88,362</div>
<div style="left:695px;top:549px;width:91px;height:41px;color:#1c4d6b;line-height:17px;box-sizing:border-box;overflow:hidden;text-align:center;padding-top:4px;font-size:12px;-webkit-text-stroke:0.2px #1c4d6b;letter-spacing:0.80px;display:flex;justify-content:center">615,764</div>
<div style="left:786px;top:549px;width:78px;height:41px;color:#1c4d6b;line-height:17px;box-sizing:border-box;overflow:hidden;text-align:center;padding-top:4px;font-size:12px;-webkit-text-stroke:0.2px #1c4d6b;letter-spacing:0.80px;display:flex;justify-content:center">54,468,288</div>
<div style="left:864px;top:549px;width:58px;height:41px;color:#1c4d6b;line-height:17px;box-sizing:border-box;overflow:hidden;text-align:center;padding-top:4px;font-size:12px;-webkit-text-stroke:0.2px #1c4d6b;letter-spacing:0.80px;display:flex;justify-content:center">11,305</div>
<div style="left:922px;top:549px;width:55px;height:41px;color:#1c4d6b;line-height:17px;box-sizing:border-box;overflow:hidden;text-align:center;padding-top:4px;font-size:12px;-webkit-text-stroke:0.2px #1c4d6b;letter-spacing:0.80px;display:flex;justify-content:center">9,949</div>
<div style="left:977px;top:549px;width:92px;height:41px;color:#1c4d6b;line-height:17px;box-sizing:border-box;overflow:hidden;text-align:center;padding-top:4px;font-size:12px;-webkit-text-stroke:0.2px #1c4d6b;letter-spacing:0.80px;display:flex;justify-content:center">4,676,369</div>
<div style="left:1069px;top:549px;width:78px;height:41px;color:#1c4d6b;line-height:17px;box-sizing:border-box;overflow:hidden;text-align:center;padding-top:4px;font-size:12px;-webkit-text-stroke:0.2px #1c4d6b;letter-spacing:0.80px;display:flex;justify-content:center">59,479,897</div>
<div style="left:1147px;top:549px;width:58px;height:41px;color:#1c4d6b;line-height:17px;box-sizing:border-box;overflow:hidden;text-align:center;padding-top:4px;font-size:12px;-webkit-text-stroke:0.2px #1c4d6b;letter-spacing:0.80px;display:flex;justify-content:center">78,621</div>
<div style="left:1205px;top:549px;width:58px;height:41px;color:#1c4d6b;line-height:17px;box-sizing:border-box;overflow:hidden;text-align:center;padding-top:4px;font-size:12px;-webkit-text-stroke:0.2px #1c4d6b;letter-spacing:0.80px;display:flex;justify-content:center">78,413</div>
<div style="left:1301.3px;top:558.6px;width:5px;height:5.2px;border:1.7px solid #1c4d6b;border-radius:50%;box-sizing:border-box"></div>
<div style="left:1366.3px;top:558.6px;width:5px;height:5.2px;border:1.7px solid #1c4d6b;border-radius:50%;box-sizing:border-box"></div>
<div style="left:1412.3px;top:558.6px;width:5px;height:5.2px;border:1.7px solid #1c4d6b;border-radius:50%;box-sizing:border-box"></div>
<div style="left:1436px;top:549px;width:92px;height:41px;color:#1c4d6b;line-height:17px;box-sizing:border-box;overflow:hidden;text-align:center;padding-top:4px;font-size:12px;-webkit-text-stroke:0.2px #1c4d6b;letter-spacing:0.80px;display:flex;justify-content:center">4,676,369</div>
<div style="left:1528px;top:549px;width:78px;height:41px;color:#1c4d6b;line-height:17px;box-sizing:border-box;overflow:hidden;text-align:center;padding-top:4px;font-size:12px;-webkit-text-stroke:0.2px #1c4d6b;letter-spacing:0.80px;display:flex;justify-content:center">59,479,897</div>
<div style="left:1606px;top:549px;width:59px;height:41px;color:#1c4d6b;line-height:17px;box-sizing:border-box;overflow:hidden;text-align:center;padding-top:4px;font-size:12px;-webkit-text-stroke:0.2px #1c4d6b;letter-spacing:0.80px;display:flex;justify-content:center">78,621</div>
<div style="left:1665px;top:549px;width:58px;height:41px;color:#1c4d6b;line-height:17px;box-sizing:border-box;overflow:hidden;text-align:center;padding-top:4px;font-size:12px;-webkit-text-stroke:0.2px #1c4d6b;letter-spacing:0.80px;display:flex;justify-content:center">78,413</div>
<div style="left:1723px;top:549px;width:43px;height:41px;color:#1c4d6b;line-height:17px;box-sizing:border-box;overflow:hidden;text-align:center;padding-top:5px;-webkit-text-stroke:0.3px #1c4d6b;display:flex;flex-direction:column;align-items:center"><span class="f c">مجموعه</span></div>
<div style="left:1766px;top:549px;width:118px;height:41px;color:#1c4d6b;line-height:17px;box-sizing:border-box;overflow:hidden;text-align:right;padding:5px 3px 0 0;-webkit-text-stroke:0.2px #1c4d6b"><span class="f">جعبه الکترونیکي کنترل</span><br><span class="f">موتور ECU</span></div>
<div style="left:35px;top:590px;width:1850px;height:24px;background:#d1e4f5"></div>
<div style="left:202px;top:590px;width:78px;height:24px;background:#fde29e"></div>
<div style="left:403px;top:590px;width:95px;height:24px;background:#fde29e"></div>
<div style="left:498px;top:590px;width:79px;height:24px;background:#fde29e"></div>
<div style="left:577px;top:590px;width:60px;height:24px;background:#fde29e"></div>
<div style="left:637px;top:590px;width:58px;height:24px;background:#fde29e"></div>
<div style="left:786px;top:590px;width:78px;height:24px;background:#fde29e"></div>
<div style="left:977px;top:590px;width:92px;height:24px;background:#fde29e"></div>
<div style="left:1069px;top:590px;width:78px;height:24px;background:#fde29e"></div>
<div style="left:1147px;top:590px;width:58px;height:24px;background:#fde29e"></div>
<div style="left:1205px;top:590px;width:58px;height:24px;background:#fde29e"></div>
<div style="left:1528px;top:590px;width:78px;height:24px;background:#fde29e"></div>
<div style="left:35px;top:590px;width:75px;height:24px;color:#1c4d6b;line-height:17px;box-sizing:border-box;overflow:hidden;text-align:right;padding:5px 1px 0 0;-webkit-text-stroke:0.3px #1c4d6b"><span class="f">تولید</span></div>
<div style="left:110px;top:590px;width:92px;height:24px;color:#1c4d6b;line-height:17px;box-sizing:border-box;overflow:hidden;text-align:center;padding-top:4px;font-size:12px;-webkit-text-stroke:0.2px #1c4d6b;letter-spacing:0.80px;display:flex;justify-content:center">718,210</div>
<div style="left:202px;top:590px;width:78px;height:24px;color:#1c4d6b;line-height:17px;box-sizing:border-box;overflow:hidden;text-align:center;padding-top:4px;font-size:12px;-webkit-text-stroke:0.2px #1c4d6b;letter-spacing:0.80px;display:flex;justify-content:center">3,904,907</div>
<div style="left:280px;top:590px;width:64px;height:24px;color:#1c4d6b;line-height:17px;box-sizing:border-box;overflow:hidden;text-align:center;padding-top:4px;font-size:12px;-webkit-text-stroke:0.2px #1c4d6b;letter-spacing:0.80px;display:flex;justify-content:center">183,925</div>
<div style="left:344px;top:590px;width:59px;height:24px;color:#1c4d6b;line-height:17px;box-sizing:border-box;overflow:hidden;text-align:center;padding-top:4px;font-size:12px;-webkit-text-stroke:0.2px #1c4d6b;letter-spacing:0.80px;display:flex;justify-content:center">202,672</div>
<div style="left:403px;top:590px;width:95px;height:24px;color:#1c4d6b;line-height:17px;box-sizing:border-box;overflow:hidden;text-align:center;padding-top:4px;font-size:12px;-webkit-text-stroke:0.2px #1c4d6b;letter-spacing:0.80px;display:flex;justify-content:center">944,719</div>
<div style="left:498px;top:590px;width:79px;height:24px;color:#1c4d6b;line-height:17px;box-sizing:border-box;overflow:hidden;text-align:center;padding-top:4px;font-size:12px;-webkit-text-stroke:0.2px #1c4d6b;letter-spacing:0.80px;display:flex;justify-content:center">5,390,263</div>
<div style="left:577px;top:590px;width:60px;height:24px;color:#1c4d6b;line-height:17px;box-sizing:border-box;overflow:hidden;text-align:center;padding-top:4px;font-size:12px;-webkit-text-stroke:0.2px #1c4d6b;letter-spacing:0.80px;display:flex;justify-content:center">175,264</div>
<div style="left:637px;top:590px;width:58px;height:24px;color:#1c4d6b;line-height:17px;box-sizing:border-box;overflow:hidden;text-align:center;padding-top:4px;font-size:12px;-webkit-text-stroke:0.2px #1c4d6b;letter-spacing:0.80px;display:flex;justify-content:center">167,313</div>
<div style="left:695px;top:590px;width:91px;height:24px;color:#1c4d6b;line-height:17px;box-sizing:border-box;overflow:hidden;text-align:center;padding-top:4px;font-size:12px;-webkit-text-stroke:0.2px #1c4d6b;letter-spacing:0.80px;display:flex;justify-content:center">192,352</div>
<div style="left:786px;top:590px;width:78px;height:24px;color:#1c4d6b;line-height:17px;box-sizing:border-box;overflow:hidden;text-align:center;padding-top:4px;font-size:12px;-webkit-text-stroke:0.2px #1c4d6b;letter-spacing:0.80px;display:flex;justify-content:center">5,452,463</div>
<div style="left:864px;top:590px;width:58px;height:24px;color:#1c4d6b;line-height:17px;box-sizing:border-box;overflow:hidden;text-align:center;padding-top:4px;font-size:12px;-webkit-text-stroke:0.2px #1c4d6b;letter-spacing:0.80px;display:flex;justify-content:center">35,278</div>
<div style="left:922px;top:590px;width:55px;height:24px;color:#1c4d6b;line-height:17px;box-sizing:border-box;overflow:hidden;text-align:center;padding-top:4px;font-size:12px;-webkit-text-stroke:0.2px #1c4d6b;letter-spacing:0.80px;display:flex;justify-content:center">36,900</div>
<div style="left:977px;top:590px;width:92px;height:24px;color:#1c4d6b;line-height:17px;box-sizing:border-box;overflow:hidden;text-align:center;padding-top:4px;font-size:12px;-webkit-text-stroke:0.2px #1c4d6b;letter-spacing:0.80px;display:flex;justify-content:center">752,367</div>
<div style="left:1069px;top:590px;width:78px;height:24px;color:#1c4d6b;line-height:17px;box-sizing:border-box;overflow:hidden;text-align:center;padding-top:4px;font-size:12px;-webkit-text-stroke:0.2px #1c4d6b;letter-spacing:0.80px;display:flex;justify-content:center">5,374,587</div>
<div style="left:1147px;top:590px;width:58px;height:24px;color:#1c4d6b;line-height:17px;box-sizing:border-box;overflow:hidden;text-align:center;padding-top:4px;font-size:12px;-webkit-text-stroke:0.2px #1c4d6b;letter-spacing:0.80px;display:flex;justify-content:center">139,986</div>
<div style="left:1205px;top:590px;width:58px;height:24px;color:#1c4d6b;line-height:17px;box-sizing:border-box;overflow:hidden;text-align:center;padding-top:4px;font-size:12px;-webkit-text-stroke:0.2px #1c4d6b;letter-spacing:0.80px;display:flex;justify-content:center">130,413</div>
<div style="left:1301.3px;top:599.6px;width:5px;height:5.2px;border:1.7px solid #1c4d6b;border-radius:50%;box-sizing:border-box"></div>
<div style="left:1366.3px;top:599.6px;width:5px;height:5.2px;border:1.7px solid #1c4d6b;border-radius:50%;box-sizing:border-box"></div>
<div style="left:1412.3px;top:599.6px;width:5px;height:5.2px;border:1.7px solid #1c4d6b;border-radius:50%;box-sizing:border-box"></div>
<div style="left:1436px;top:590px;width:92px;height:24px;color:#1c4d6b;line-height:17px;box-sizing:border-box;overflow:hidden;text-align:center;padding-top:4px;font-size:12px;-webkit-text-stroke:0.2px #1c4d6b;letter-spacing:0.80px;display:flex;justify-content:center">752,367</div>
<div style="left:1528px;top:590px;width:78px;height:24px;color:#1c4d6b;line-height:17px;box-sizing:border-box;overflow:hidden;text-align:center;padding-top:4px;font-size:12px;-webkit-text-stroke:0.2px #1c4d6b;letter-spacing:0.80px;display:flex;justify-content:center">5,374,587</div>
<div style="left:1606px;top:590px;width:59px;height:24px;color:#1c4d6b;line-height:17px;box-sizing:border-box;overflow:hidden;text-align:center;padding-top:4px;font-size:12px;-webkit-text-stroke:0.2px #1c4d6b;letter-spacing:0.80px;display:flex;justify-content:center">139,986</div>
<div style="left:1665px;top:590px;width:58px;height:24px;color:#1c4d6b;line-height:17px;box-sizing:border-box;overflow:hidden;text-align:center;padding-top:4px;font-size:12px;-webkit-text-stroke:0.2px #1c4d6b;letter-spacing:0.80px;display:flex;justify-content:center">130,413</div>
<div style="left:1723px;top:590px;width:43px;height:24px;color:#1c4d6b;line-height:17px;box-sizing:border-box;overflow:hidden;text-align:center;padding-top:5px;-webkit-text-stroke:0.3px #1c4d6b;display:flex;flex-direction:column;align-items:center"><span class="f c">مجموعه</span></div>
<div style="left:1766px;top:590px;width:118px;height:24px;color:#1c4d6b;line-height:17px;box-sizing:border-box;overflow:hidden;text-align:right;padding:5px 3px 0 0;-webkit-text-stroke:0.2px #1c4d6b"><span class="f">انژکتور</span></div>
<div style="left:35px;top:614px;width:1850px;height:24px;background:#efefef"></div>
<div style="left:202px;top:614px;width:78px;height:24px;background:#fde29e"></div>
<div style="left:403px;top:614px;width:95px;height:24px;background:#fde29e"></div>
<div style="left:498px;top:614px;width:79px;height:24px;background:#fde29e"></div>
<div style="left:577px;top:614px;width:60px;height:24px;background:#fde29e"></div>
<div style="left:637px;top:614px;width:58px;height:24px;background:#fde29e"></div>
<div style="left:786px;top:614px;width:78px;height:24px;background:#fde29e"></div>
<div style="left:977px;top:614px;width:92px;height:24px;background:#fde29e"></div>
<div style="left:1069px;top:614px;width:78px;height:24px;background:#fde29e"></div>
<div style="left:1147px;top:614px;width:58px;height:24px;background:#fde29e"></div>
<div style="left:1205px;top:614px;width:58px;height:24px;background:#fde29e"></div>
<div style="left:1528px;top:614px;width:78px;height:24px;background:#fde29e"></div>
<div style="left:35px;top:614px;width:75px;height:24px;color:#1c4d6b;line-height:17px;box-sizing:border-box;overflow:hidden;text-align:right;padding:5px 1px 0 0;-webkit-text-stroke:0.3px #1c4d6b"><span class="f">تولید</span></div>
<div style="left:153.8px;top:623.6px;width:5px;height:5.2px;border:1.7px solid #1c4d6b;border-radius:50%;box-sizing:border-box"></div>
<div style="left:238.8px;top:623.6px;width:5px;height:5.2px;border:1.7px solid #1c4d6b;border-radius:50%;box-sizing:border-box"></div>
<div style="left:309.8px;top:623.6px;width:5px;height:5.2px;border:1.7px solid #1c4d6b;border-radius:50%;box-sizing:border-box"></div>
<div style="left:371.3px;top:623.6px;width:5px;height:5.2px;border:1.7px solid #1c4d6b;border-radius:50%;box-sizing:border-box"></div>
<div style="left:403px;top:614px;width:95px;height:24px;color:#1c4d6b;line-height:17px;box-sizing:border-box;overflow:hidden;text-align:center;padding-top:4px;font-size:12px;-webkit-text-stroke:0.2px #1c4d6b;letter-spacing:0.80px;display:flex;justify-content:center">52,294</div>
<div style="left:498px;top:614px;width:79px;height:24px;color:#1c4d6b;line-height:17px;box-sizing:border-box;overflow:hidden;text-align:center;padding-top:4px;font-size:12px;-webkit-text-stroke:0.2px #1c4d6b;letter-spacing:0.80px;display:flex;justify-content:center">38,115,160</div>
<div style="left:577px;top:614px;width:60px;height:24px;color:#1c4d6b;line-height:17px;box-sizing:border-box;overflow:hidden;text-align:center;padding-top:4px;font-size:12px;-webkit-text-stroke:0.2px #1c4d6b;letter-spacing:0.80px;display:flex;justify-content:center">1,372</div>
<div style="left:637px;top:614px;width:58px;height:24px;color:#1c4d6b;line-height:17px;box-sizing:border-box;overflow:hidden;text-align:center;padding-top:4px;font-size:12px;-webkit-text-stroke:0.2px #1c4d6b;letter-spacing:0.80px;display:flex;justify-content:center">1,612</div>
<div style="left:738.3px;top:623.6px;width:5px;height:5.2px;border:1.7px solid #1c4d6b;border-radius:50%;box-sizing:border-box"></div>
<div style="left:822.8px;top:623.6px;width:5px;height:5.2px;border:1.7px solid #1c4d6b;border-radius:50%;box-sizing:border-box"></div>
<div style="left:977px;top:614px;width:92px;height:24px;color:#1c4d6b;line-height:17px;box-sizing:border-box;overflow:hidden;text-align:center;padding-top:4px;font-size:12px;-webkit-text-stroke:0.2px #1c4d6b;letter-spacing:0.80px;display:flex;justify-content:center">52,294</div>
<div style="left:1069px;top:614px;width:78px;height:24px;color:#1c4d6b;line-height:17px;box-sizing:border-box;overflow:hidden;text-align:center;padding-top:4px;font-size:12px;-webkit-text-stroke:0.2px #1c4d6b;letter-spacing:0.80px;display:flex;justify-content:center">38,115,160</div>
<div style="left:1147px;top:614px;width:58px;height:24px;color:#1c4d6b;line-height:17px;box-sizing:border-box;overflow:hidden;text-align:center;padding-top:4px;font-size:12px;-webkit-text-stroke:0.2px #1c4d6b;letter-spacing:0.80px;display:flex;justify-content:center">1,372</div>
<div style="left:1205px;top:614px;width:58px;height:24px;color:#1c4d6b;line-height:17px;box-sizing:border-box;overflow:hidden;text-align:center;padding-top:4px;font-size:12px;-webkit-text-stroke:0.2px #1c4d6b;letter-spacing:0.80px;display:flex;justify-content:center">1,612</div>
<div style="left:1301.3px;top:623.6px;width:5px;height:5.2px;border:1.7px solid #1c4d6b;border-radius:50%;box-sizing:border-box"></div>
<div style="left:1366.3px;top:623.6px;width:5px;height:5.2px;border:1.7px solid #1c4d6b;border-radius:50%;box-sizing:border-box"></div>
<div style="left:1412.3px;top:623.6px;width:5px;height:5.2px;border:1.7px solid #1c4d6b;border-radius:50%;box-sizing:border-box"></div>
<div style="left:1436px;top:614px;width:92px;height:24px;color:#1c4d6b;line-height:17px;box-sizing:border-box;overflow:hidden;text-align:center;padding-top:4px;font-size:12px;-webkit-text-stroke:0.2px #1c4d6b;letter-spacing:0.80px;display:flex;justify-content:center">52,294</div>
<div style="left:1528px;top:614px;width:78px;height:24px;color:#1c4d6b;line-height:17px;box-sizing:border-box;overflow:hidden;text-align:center;padding-top:4px;font-size:12px;-webkit-text-stroke:0.2px #1c4d6b;letter-spacing:0.80px;display:flex;justify-content:center">38,115,160</div>
<div style="left:1606px;top:614px;width:59px;height:24px;color:#1c4d6b;line-height:17px;box-sizing:border-box;overflow:hidden;text-align:center;padding-top:4px;font-size:12px;-webkit-text-stroke:0.2px #1c4d6b;letter-spacing:0.80px;display:flex;justify-content:center">1,372</div>
<div style="left:1665px;top:614px;width:58px;height:24px;color:#1c4d6b;line-height:17px;box-sizing:border-box;overflow:hidden;text-align:center;padding-top:4px;font-size:12px;-webkit-text-stroke:0.2px #1c4d6b;letter-spacing:0.80px;display:flex;justify-content:center">1,612</div>
<div style="left:1723px;top:614px;width:43px;height:24px;color:#1c4d6b;line-height:17px;box-sizing:border-box;overflow:hidden;text-align:center;padding-top:5px;-webkit-text-stroke:0.3px #1c4d6b;display:flex;flex-direction:column;align-items:center"><span class="f c">مجموعه</span></div>
<div style="left:1766px;top:614px;width:118px;height:24px;color:#1c4d6b;line-height:17px;box-sizing:border-box;overflow:hidden;text-align:right;padding:5px 3px 0 0;-webkit-text-stroke:0.2px #1c4d6b"><span class="f">رگلاتور گاز CNG</span></div>
<div style="left:35px;top:638px;width:1850px;height:25px;background:#d1e4f5"></div>
<div style="left:202px;top:638px;width:78px;height:25px;background:#fde29e"></div>
<div style="left:403px;top:638px;width:95px;height:25px;background:#fde29e"></div>
<div style="left:498px;top:638px;width:79px;height:25px;background:#fde29e"></div>
<div style="left:577px;top:638px;width:60px;height:25px;background:#fde29e"></div>
<div style="left:637px;top:638px;width:58px;height:25px;background:#fde29e"></div>
<div style="left:786px;top:638px;width:78px;height:25px;background:#fde29e"></div>
<div style="left:977px;top:638px;width:92px;height:25px;background:#fde29e"></div>
<div style="left:1069px;top:638px;width:78px;height:25px;background:#fde29e"></div>
<div style="left:1147px;top:638px;width:58px;height:25px;background:#fde29e"></div>
<div style="left:1205px;top:638px;width:58px;height:25px;background:#fde29e"></div>
<div style="left:1528px;top:638px;width:78px;height:25px;background:#fde29e"></div>
<div style="left:35px;top:638px;width:75px;height:25px;color:#1c4d6b;line-height:17px;box-sizing:border-box;overflow:hidden;text-align:right;padding:5px 1px 0 0;-webkit-text-stroke:0.3px #1c4d6b"><span class="f">تولید</span></div>
<div style="left:110px;top:638px;width:92px;height:25px;color:#1c4d6b;line-height:17px;box-sizing:border-box;overflow:hidden;text-align:center;padding-top:4px;font-size:12px;-webkit-text-stroke:0.2px #1c4d6b;letter-spacing:0.80px;display:flex;justify-content:center">379,221</div>
<div style="left:202px;top:638px;width:78px;height:25px;color:#1c4d6b;line-height:17px;box-sizing:border-box;overflow:hidden;text-align:center;padding-top:4px;font-size:12px;-webkit-text-stroke:0.2px #1c4d6b;letter-spacing:0.80px;display:flex;justify-content:center">3,944,548</div>
<div style="left:280px;top:638px;width:64px;height:25px;color:#1c4d6b;line-height:17px;box-sizing:border-box;overflow:hidden;text-align:center;padding-top:4px;font-size:12px;-webkit-text-stroke:0.2px #1c4d6b;letter-spacing:0.80px;display:flex;justify-content:center">96,138</div>
<div style="left:344px;top:638px;width:59px;height:25px;color:#1c4d6b;line-height:17px;box-sizing:border-box;overflow:hidden;text-align:center;padding-top:4px;font-size:12px;-webkit-text-stroke:0.2px #1c4d6b;letter-spacing:0.80px;display:flex;justify-content:center">137,690</div>
<div style="left:403px;top:638px;width:95px;height:25px;color:#1c4d6b;line-height:17px;box-sizing:border-box;overflow:hidden;text-align:center;padding-top:4px;font-size:12px;-webkit-text-stroke:0.2px #1c4d6b;letter-spacing:0.80px;display:flex;justify-content:center">644,506</div>
<div style="left:498px;top:638px;width:79px;height:25px;color:#1c4d6b;line-height:17px;box-sizing:border-box;overflow:hidden;text-align:center;padding-top:4px;font-size:12px;-webkit-text-stroke:0.2px #1c4d6b;letter-spacing:0.80px;display:flex;justify-content:center">3,015,346</div>
<div style="left:577px;top:638px;width:60px;height:25px;color:#1c4d6b;line-height:17px;box-sizing:border-box;overflow:hidden;text-align:center;padding-top:4px;font-size:12px;-webkit-text-stroke:0.2px #1c4d6b;letter-spacing:0.80px;display:flex;justify-content:center">213,742</div>
<div style="left:637px;top:638px;width:58px;height:25px;color:#1c4d6b;line-height:17px;box-sizing:border-box;overflow:hidden;text-align:center;padding-top:4px;font-size:12px;-webkit-text-stroke:0.2px #1c4d6b;letter-spacing:0.80px;display:flex;justify-content:center">221,634</div>
<div style="left:695px;top:638px;width:91px;height:25px;color:#1c4d6b;line-height:17px;box-sizing:border-box;overflow:hidden;text-align:center;padding-top:4px;font-size:12px;-webkit-text-stroke:0.2px #1c4d6b;letter-spacing:0.80px;display:flex;justify-content:center">105,089</div>
<div style="left:786px;top:638px;width:78px;height:25px;color:#1c4d6b;line-height:17px;box-sizing:border-box;overflow:hidden;text-align:center;padding-top:4px;font-size:12px;-webkit-text-stroke:0.2px #1c4d6b;letter-spacing:0.80px;display:flex;justify-content:center">3,232,414</div>
<div style="left:864px;top:638px;width:58px;height:25px;color:#1c4d6b;line-height:17px;box-sizing:border-box;overflow:hidden;text-align:center;padding-top:4px;font-size:12px;-webkit-text-stroke:0.2px #1c4d6b;letter-spacing:0.80px;display:flex;justify-content:center">32,511</div>
<div style="left:922px;top:638px;width:55px;height:25px;color:#1c4d6b;line-height:17px;box-sizing:border-box;overflow:hidden;text-align:center;padding-top:4px;font-size:12px;-webkit-text-stroke:0.2px #1c4d6b;letter-spacing:0.80px;display:flex;justify-content:center">31,075</div>
<div style="left:977px;top:638px;width:92px;height:25px;color:#1c4d6b;line-height:17px;box-sizing:border-box;overflow:hidden;text-align:center;padding-top:4px;font-size:12px;-webkit-text-stroke:0.2px #1c4d6b;letter-spacing:0.80px;display:flex;justify-content:center">539,417</div>
<div style="left:1069px;top:638px;width:78px;height:25px;color:#1c4d6b;line-height:17px;box-sizing:border-box;overflow:hidden;text-align:center;padding-top:4px;font-size:12px;-webkit-text-stroke:0.2px #1c4d6b;letter-spacing:0.80px;display:flex;justify-content:center">2,976,406</div>
<div style="left:1147px;top:638px;width:58px;height:25px;color:#1c4d6b;line-height:17px;box-sizing:border-box;overflow:hidden;text-align:center;padding-top:4px;font-size:12px;-webkit-text-stroke:0.2px #1c4d6b;letter-spacing:0.80px;display:flex;justify-content:center">181,231</div>
<div style="left:1205px;top:638px;width:58px;height:25px;color:#1c4d6b;line-height:17px;box-sizing:border-box;overflow:hidden;text-align:center;padding-top:4px;font-size:12px;-webkit-text-stroke:0.2px #1c4d6b;letter-spacing:0.80px;display:flex;justify-content:center">190,559</div>
<div style="left:1301.3px;top:647.6px;width:5px;height:5.2px;border:1.7px solid #1c4d6b;border-radius:50%;box-sizing:border-box"></div>
<div style="left:1366.3px;top:647.6px;width:5px;height:5.2px;border:1.7px solid #1c4d6b;border-radius:50%;box-sizing:border-box"></div>
<div style="left:1412.3px;top:647.6px;width:5px;height:5.2px;border:1.7px solid #1c4d6b;border-radius:50%;box-sizing:border-box"></div>
<div style="left:1436px;top:638px;width:92px;height:25px;color:#1c4d6b;line-height:17px;box-sizing:border-box;overflow:hidden;text-align:center;padding-top:4px;font-size:12px;-webkit-text-stroke:0.2px #1c4d6b;letter-spacing:0.80px;display:flex;justify-content:center">539,417</div>
<div style="left:1528px;top:638px;width:78px;height:25px;color:#1c4d6b;line-height:17px;box-sizing:border-box;overflow:hidden;text-align:center;padding-top:4px;font-size:12px;-webkit-text-stroke:0.2px #1c4d6b;letter-spacing:0.80px;display:flex;justify-content:center">2,976,406</div>
<div style="left:1606px;top:638px;width:59px;height:25px;color:#1c4d6b;line-height:17px;box-sizing:border-box;overflow:hidden;text-align:center;padding-top:4px;font-size:12px;-webkit-text-stroke:0.2px #1c4d6b;letter-spacing:0.80px;display:flex;justify-content:center">181,231</div>
<div style="left:1665px;top:638px;width:58px;height:25px;color:#1c4d6b;line-height:17px;box-sizing:border-box;overflow:hidden;text-align:center;padding-top:4px;font-size:12px;-webkit-text-stroke:0.2px #1c4d6b;letter-spacing:0.80px;display:flex;justify-content:center">190,559</div>
<div style="left:1723px;top:638px;width:43px;height:25px;color:#1c4d6b;line-height:17px;box-sizing:border-box;overflow:hidden;text-align:center;padding-top:5px;-webkit-text-stroke:0.3px #1c4d6b;display:flex;flex-direction:column;align-items:center"><span class="f c">مجموعه</span></div>
<div style="left:1766px;top:638px;width:118px;height:25px;color:#1c4d6b;line-height:17px;box-sizing:border-box;overflow:hidden;text-align:right;padding:5px 3px 0 0;-webkit-text-stroke:0.2px #1c4d6b"><span class="f">سیستمهاي ضد سرقت</span></div>
<div style="left:35px;top:663px;width:1850px;height:24px;background:#efefef"></div>
<div style="left:202px;top:663px;width:78px;height:24px;background:#fde29e"></div>
<div style="left:403px;top:663px;width:95px;height:24px;background:#fde29e"></div>
<div style="left:498px;top:663px;width:79px;height:24px;background:#fde29e"></div>
<div style="left:577px;top:663px;width:60px;height:24px;background:#fde29e"></div>
<div style="left:637px;top:663px;width:58px;height:24px;background:#fde29e"></div>
<div style="left:786px;top:663px;width:78px;height:24px;background:#fde29e"></div>
<div style="left:977px;top:663px;width:92px;height:24px;background:#fde29e"></div>
<div style="left:1069px;top:663px;width:78px;height:24px;background:#fde29e"></div>
<div style="left:1147px;top:663px;width:58px;height:24px;background:#fde29e"></div>
<div style="left:1205px;top:663px;width:58px;height:24px;background:#fde29e"></div>
<div style="left:1528px;top:663px;width:78px;height:24px;background:#fde29e"></div>
<div style="left:35px;top:663px;width:75px;height:24px;color:#1c4d6b;line-height:17px;box-sizing:border-box;overflow:hidden;text-align:right;padding:5px 1px 0 0;-webkit-text-stroke:0.3px #1c4d6b"><span class="f">تولید</span></div>
<div style="left:153.8px;top:672.6px;width:5px;height:5.2px;border:1.7px solid #1c4d6b;border-radius:50%;box-sizing:border-box"></div>
<div style="left:238.8px;top:672.6px;width:5px;height:5.2px;border:1.7px solid #1c4d6b;border-radius:50%;box-sizing:border-box"></div>
<div style="left:309.8px;top:672.6px;width:5px;height:5.2px;border:1.7px solid #1c4d6b;border-radius:50%;box-sizing:border-box"></div>
<div style="left:371.3px;top:672.6px;width:5px;height:5.2px;border:1.7px solid #1c4d6b;border-radius:50%;box-sizing:border-box"></div>
<div style="left:403px;top:663px;width:95px;height:24px;color:#1c4d6b;line-height:17px;box-sizing:border-box;overflow:hidden;text-align:center;padding-top:4px;font-size:12px;-webkit-text-stroke:0.2px #1c4d6b;letter-spacing:0.80px;display:flex;justify-content:center">36,460</div>
<div style="left:498px;top:663px;width:79px;height:24px;color:#1c4d6b;line-height:17px;box-sizing:border-box;overflow:hidden;text-align:center;padding-top:4px;font-size:12px;-webkit-text-stroke:0.2px #1c4d6b;letter-spacing:0.80px;display:flex;justify-content:center">5,100,014</div>
<div style="left:577px;top:663px;width:60px;height:24px;color:#1c4d6b;line-height:17px;box-sizing:border-box;overflow:hidden;text-align:center;padding-top:4px;font-size:12px;-webkit-text-stroke:0.2px #1c4d6b;letter-spacing:0.80px;display:flex;justify-content:center">7,149</div>
<div style="left:663.8px;top:672.6px;width:5px;height:5.2px;border:1.7px solid #1c4d6b;border-radius:50%;box-sizing:border-box"></div>
<div style="left:695px;top:663px;width:91px;height:24px;color:#1c4d6b;line-height:17px;box-sizing:border-box;overflow:hidden;text-align:center;padding-top:4px;font-size:12px;-webkit-text-stroke:0.2px #1c4d6b;letter-spacing:0.80px;display:flex;justify-content:center">5,865</div>
<div style="left:786px;top:663px;width:78px;height:24px;color:#1c4d6b;line-height:17px;box-sizing:border-box;overflow:hidden;text-align:center;padding-top:4px;font-size:12px;-webkit-text-stroke:0.2px #1c4d6b;letter-spacing:0.80px;display:flex;justify-content:center">5,100,000</div>
<div style="left:864px;top:663px;width:58px;height:24px;color:#1c4d6b;line-height:17px;box-sizing:border-box;overflow:hidden;text-align:center;padding-top:4px;font-size:12px;-webkit-text-stroke:0.2px #1c4d6b;letter-spacing:0.80px;display:flex;justify-content:center">1,150</div>
<div style="left:947.3px;top:672.6px;width:5px;height:5.2px;border:1.7px solid #1c4d6b;border-radius:50%;box-sizing:border-box"></div>
<div style="left:977px;top:663px;width:92px;height:24px;color:#1c4d6b;line-height:17px;box-sizing:border-box;overflow:hidden;text-align:center;padding-top:4px;font-size:12px;-webkit-text-stroke:0.2px #1c4d6b;letter-spacing:0.80px;display:flex;justify-content:center">30,595</div>
<div style="left:1069px;top:663px;width:78px;height:24px;color:#1c4d6b;line-height:17px;box-sizing:border-box;overflow:hidden;text-align:center;padding-top:4px;font-size:12px;-webkit-text-stroke:0.2px #1c4d6b;letter-spacing:0.80px;display:flex;justify-content:center">5,100,017</div>
<div style="left:1147px;top:663px;width:58px;height:24px;color:#1c4d6b;line-height:17px;box-sizing:border-box;overflow:hidden;text-align:center;padding-top:4px;font-size:12px;-webkit-text-stroke:0.2px #1c4d6b;letter-spacing:0.80px;display:flex;justify-content:center">5,999</div>
<div style="left:1231.8px;top:672.6px;width:5px;height:5.2px;border:1.7px solid #1c4d6b;border-radius:50%;box-sizing:border-box"></div>
<div style="left:1301.3px;top:672.6px;width:5px;height:5.2px;border:1.7px solid #1c4d6b;border-radius:50%;box-sizing:border-box"></div>
<div style="left:1366.3px;top:672.6px;width:5px;height:5.2px;border:1.7px solid #1c4d6b;border-radius:50%;box-sizing:border-box"></div>
<div style="left:1412.3px;top:672.6px;width:5px;height:5.2px;border:1.7px solid #1c4d6b;border-radius:50%;box-sizing:border-box"></div>
<div style="left:1436px;top:663px;width:92px;height:24px;color:#1c4d6b;line-height:17px;box-sizing:border-box;overflow:hidden;text-align:center;padding-top:4px;font-size:12px;-webkit-text-stroke:0.2px #1c4d6b;letter-spacing:0.80px;display:flex;justify-content:center">30,595</div>
<div style="left:1528px;top:663px;width:78px;height:24px;color:#1c4d6b;line-height:17px;box-sizing:border-box;overflow:hidden;text-align:center;padding-top:4px;font-size:12px;-webkit-text-stroke:0.2px #1c4d6b;letter-spacing:0.80px;display:flex;justify-content:center">5,100,017</div>
<div style="left:1606px;top:663px;width:59px;height:24px;color:#1c4d6b;line-height:17px;box-sizing:border-box;overflow:hidden;text-align:center;padding-top:4px;font-size:12px;-webkit-text-stroke:0.2px #1c4d6b;letter-spacing:0.80px;display:flex;justify-content:center">5,999</div>
<div style="left:1691.8px;top:672.6px;width:5px;height:5.2px;border:1.7px solid #1c4d6b;border-radius:50%;box-sizing:border-box"></div>
<div style="left:1723px;top:663px;width:43px;height:24px;color:#1c4d6b;line-height:17px;box-sizing:border-box;overflow:hidden;text-align:center;padding-top:5px;-webkit-text-stroke:0.3px #1c4d6b;display:flex;flex-direction:column;align-items:center"><span class="f c">مجموعه</span></div>
<div style="left:1766px;top:663px;width:118px;height:24px;color:#1c4d6b;line-height:17px;box-sizing:border-box;overflow:hidden;text-align:right;padding:5px 3px 0 0;-webkit-text-stroke:0.2px #1c4d6b"><span class="f">ریل سوخت خودرو</span></div>
<div style="left:35px;top:687px;width:1850px;height:41px;background:#d1e4f5"></div>
<div style="left:202px;top:687px;width:78px;height:41px;background:#fde29e"></div>
<div style="left:403px;top:687px;width:95px;height:41px;background:#fde29e"></div>
<div style="left:498px;top:687px;width:79px;height:41px;background:#fde29e"></div>
<div style="left:577px;top:687px;width:60px;height:41px;background:#fde29e"></div>
<div style="left:637px;top:687px;width:58px;height:41px;background:#fde29e"></div>
<div style="left:786px;top:687px;width:78px;height:41px;background:#fde29e"></div>
<div style="left:977px;top:687px;width:92px;height:41px;background:#fde29e"></div>
<div style="left:1069px;top:687px;width:78px;height:41px;background:#fde29e"></div>
<div style="left:1147px;top:687px;width:58px;height:41px;background:#fde29e"></div>
<div style="left:1205px;top:687px;width:58px;height:41px;background:#fde29e"></div>
<div style="left:1528px;top:687px;width:78px;height:41px;background:#fde29e"></div>
<div style="left:35px;top:687px;width:75px;height:41px;color:#1c4d6b;line-height:17px;box-sizing:border-box;overflow:hidden;text-align:right;padding:5px 1px 0 0;-webkit-text-stroke:0.3px #1c4d6b"><span class="f">تولید</span></div>
<div style="left:153.8px;top:696.6px;width:5px;height:5.2px;border:1.7px solid #1c4d6b;border-radius:50%;box-sizing:border-box"></div>
<div style="left:238.8px;top:696.6px;width:5px;height:5.2px;border:1.7px solid #1c4d6b;border-radius:50%;box-sizing:border-box"></div>
<div style="left:309.8px;top:696.6px;width:5px;height:5.2px;border:1.7px solid #1c4d6b;border-radius:50%;box-sizing:border-box"></div>
<div style="left:371.3px;top:696.6px;width:5px;height:5.2px;border:1.7px solid #1c4d6b;border-radius:50%;box-sizing:border-box"></div>
<div style="left:448.3px;top:696.6px;width:5px;height:5.2px;border:1.7px solid #1c4d6b;border-radius:50%;box-sizing:border-box"></div>
<div style="left:535.3px;top:696.6px;width:5px;height:5.2px;border:1.7px solid #1c4d6b;border-radius:50%;box-sizing:border-box"></div>
<div style="left:604.8px;top:696.6px;width:5px;height:5.2px;border:1.7px solid #1c4d6b;border-radius:50%;box-sizing:border-box"></div>
<div style="left:663.8px;top:696.6px;width:5px;height:5.2px;border:1.7px solid #1c4d6b;border-radius:50%;box-sizing:border-box"></div>
<div style="left:738.3px;top:696.6px;width:5px;height:5.2px;border:1.7px solid #1c4d6b;border-radius:50%;box-sizing:border-box"></div>
<div style="left:822.8px;top:696.6px;width:5px;height:5.2px;border:1.7px solid #1c4d6b;border-radius:50%;box-sizing:border-box"></div>
<div style="left:1020.8px;top:696.6px;width:5px;height:5.2px;border:1.7px solid #1c4d6b;border-radius:50%;box-sizing:border-box"></div>
<div style="left:1105.8px;top:696.6px;width:5px;height:5.2px;border:1.7px solid #1c4d6b;border-radius:50%;box-sizing:border-box"></div>
<div style="left:1173.8px;top:696.6px;width:5px;height:5.2px;border:1.7px solid #1c4d6b;border-radius:50%;box-sizing:border-box"></div>
<div style="left:1231.8px;top:696.6px;width:5px;height:5.2px;border:1.7px solid #1c4d6b;border-radius:50%;box-sizing:border-box"></div>
<div style="left:1301.3px;top:696.6px;width:5px;height:5.2px;border:1.7px solid #1c4d6b;border-radius:50%;box-sizing:border-box"></div>
<div style="left:1366.3px;top:696.6px;width:5px;height:5.2px;border:1.7px solid #1c4d6b;border-radius:50%;box-sizing:border-box"></div>
<div style="left:1412.3px;top:696.6px;width:5px;height:5.2px;border:1.7px solid #1c4d6b;border-radius:50%;box-sizing:border-box"></div>
<div style="left:1479.8px;top:696.6px;width:5px;height:5.2px;border:1.7px solid #1c4d6b;border-radius:50%;box-sizing:border-box"></div>
<div style="left:1564.8px;top:696.6px;width:5px;height:5.2px;border:1.7px solid #1c4d6b;border-radius:50%;box-sizing:border-box"></div>
<div style="left:1633.3px;top:696.6px;width:5px;height:5.2px;border:1.7px solid #1c4d6b;border-radius:50%;box-sizing:border-box"></div>
<div style="left:1691.8px;top:696.6px;width:5px;height:5.2px;border:1.7px solid #1c4d6b;border-radius:50%;box-sizing:border-box"></div>
<div style="left:1723px;top:687px;width:43px;height:41px;color:#1c4d6b;line-height:17px;box-sizing:border-box;overflow:hidden;text-align:center;padding-top:5px;-webkit-text-stroke:0.3px #1c4d6b;display:flex;flex-direction:column;align-items:center"><span class="f c">مجموعه</span></div>
<div style="left:1766px;top:687px;width:118px;height:41px;color:#1c4d6b;line-height:17px;box-sizing:border-box;overflow:hidden;text-align:right;padding:5px 3px 0 0;-webkit-text-stroke:0.2px #1c4d6b"><span class="f">آژیرسیستمهاي</span><br><span class="f">هشداردهنده</span></div>
<div style="left:35px;top:728px;width:1850px;height:24px;background:#efefef"></div>
<div style="left:202px;top:728px;width:78px;height:24px;background:#fde29e"></div>
<div style="left:403px;top:728px;width:95px;height:24px;background:#fde29e"></div>
<div style="left:498px;top:728px;width:79px;height:24px;background:#fde29e"></div>
<div style="left:577px;top:728px;width:60px;height:24px;background:#fde29e"></div>
<div style="left:637px;top:728px;width:58px;height:24px;background:#fde29e"></div>
<div style="left:786px;top:728px;width:78px;height:24px;background:#fde29e"></div>
<div style="left:977px;top:728px;width:92px;height:24px;background:#fde29e"></div>
<div style="left:1069px;top:728px;width:78px;height:24px;background:#fde29e"></div>
<div style="left:1147px;top:728px;width:58px;height:24px;background:#fde29e"></div>
<div style="left:1205px;top:728px;width:58px;height:24px;background:#fde29e"></div>
<div style="left:1528px;top:728px;width:78px;height:24px;background:#fde29e"></div>
<div style="left:35px;top:728px;width:75px;height:24px;color:#1c4d6b;line-height:17px;box-sizing:border-box;overflow:hidden;text-align:right;padding:5px 1px 0 0;-webkit-text-stroke:0.3px #1c4d6b"><span class="f">تولید</span></div>
<div style="left:110px;top:728px;width:92px;height:24px;color:#1c4d6b;line-height:17px;box-sizing:border-box;overflow:hidden;text-align:center;padding-top:4px;font-size:12px;-webkit-text-stroke:0.2px #1c4d6b;letter-spacing:0.80px;display:flex;justify-content:center">530,668</div>
<div style="left:202px;top:728px;width:78px;height:24px;color:#1c4d6b;line-height:17px;box-sizing:border-box;overflow:hidden;text-align:center;padding-top:4px;font-size:12px;-webkit-text-stroke:0.2px #1c4d6b;letter-spacing:0.80px;display:flex;justify-content:center">6,312,066</div>
<div style="left:280px;top:728px;width:64px;height:24px;color:#1c4d6b;line-height:17px;box-sizing:border-box;overflow:hidden;text-align:center;padding-top:4px;font-size:12px;-webkit-text-stroke:0.2px #1c4d6b;letter-spacing:0.80px;display:flex;justify-content:center">84,072</div>
<div style="left:344px;top:728px;width:59px;height:24px;color:#1c4d6b;line-height:17px;box-sizing:border-box;overflow:hidden;text-align:center;padding-top:4px;font-size:12px;-webkit-text-stroke:0.2px #1c4d6b;letter-spacing:0.80px;display:flex;justify-content:center">88,151</div>
<div style="left:403px;top:728px;width:95px;height:24px;color:#1c4d6b;line-height:17px;box-sizing:border-box;overflow:hidden;text-align:center;padding-top:4px;font-size:12px;-webkit-text-stroke:0.2px #1c4d6b;letter-spacing:0.80px;display:flex;justify-content:center">736,877</div>
<div style="left:498px;top:728px;width:79px;height:24px;color:#1c4d6b;line-height:17px;box-sizing:border-box;overflow:hidden;text-align:center;padding-top:4px;font-size:12px;-webkit-text-stroke:0.2px #1c4d6b;letter-spacing:0.80px;display:flex;justify-content:center">8,887,781</div>
<div style="left:577px;top:728px;width:60px;height:24px;color:#1c4d6b;line-height:17px;box-sizing:border-box;overflow:hidden;text-align:center;padding-top:4px;font-size:12px;-webkit-text-stroke:0.2px #1c4d6b;letter-spacing:0.80px;display:flex;justify-content:center">82,909</div>
<div style="left:637px;top:728px;width:58px;height:24px;color:#1c4d6b;line-height:17px;box-sizing:border-box;overflow:hidden;text-align:center;padding-top:4px;font-size:12px;-webkit-text-stroke:0.2px #1c4d6b;letter-spacing:0.80px;display:flex;justify-content:center">83,764</div>
<div style="left:695px;top:728px;width:91px;height:24px;color:#1c4d6b;line-height:17px;box-sizing:border-box;overflow:hidden;text-align:center;padding-top:4px;font-size:12px;-webkit-text-stroke:0.2px #1c4d6b;letter-spacing:0.80px;display:flex;justify-content:center">103,091</div>
<div style="left:786px;top:728px;width:78px;height:24px;color:#1c4d6b;line-height:17px;box-sizing:border-box;overflow:hidden;text-align:center;padding-top:4px;font-size:12px;-webkit-text-stroke:0.2px #1c4d6b;letter-spacing:0.80px;display:flex;justify-content:center">8,436,942</div>
<div style="left:864px;top:728px;width:58px;height:24px;color:#1c4d6b;line-height:17px;box-sizing:border-box;overflow:hidden;text-align:center;padding-top:4px;font-size:12px;-webkit-text-stroke:0.2px #1c4d6b;letter-spacing:0.80px;display:flex;justify-content:center">12,219</div>
<div style="left:922px;top:728px;width:55px;height:24px;color:#1c4d6b;line-height:17px;box-sizing:border-box;overflow:hidden;text-align:center;padding-top:4px;font-size:12px;-webkit-text-stroke:0.2px #1c4d6b;letter-spacing:0.80px;display:flex;justify-content:center">13,007</div>
<div style="left:977px;top:728px;width:92px;height:24px;color:#1c4d6b;line-height:17px;box-sizing:border-box;overflow:hidden;text-align:center;padding-top:4px;font-size:12px;-webkit-text-stroke:0.2px #1c4d6b;letter-spacing:0.80px;display:flex;justify-content:center">633,786</div>
<div style="left:1069px;top:728px;width:78px;height:24px;color:#1c4d6b;line-height:17px;box-sizing:border-box;overflow:hidden;text-align:center;padding-top:4px;font-size:12px;-webkit-text-stroke:0.2px #1c4d6b;letter-spacing:0.80px;display:flex;justify-content:center">8,965,709</div>
<div style="left:1147px;top:728px;width:58px;height:24px;color:#1c4d6b;line-height:17px;box-sizing:border-box;overflow:hidden;text-align:center;padding-top:4px;font-size:12px;-webkit-text-stroke:0.2px #1c4d6b;letter-spacing:0.80px;display:flex;justify-content:center">70,690</div>
<div style="left:1205px;top:728px;width:58px;height:24px;color:#1c4d6b;line-height:17px;box-sizing:border-box;overflow:hidden;text-align:center;padding-top:4px;font-size:12px;-webkit-text-stroke:0.2px #1c4d6b;letter-spacing:0.80px;display:flex;justify-content:center">70,757</div>
<div style="left:1301.3px;top:737.6px;width:5px;height:5.2px;border:1.7px solid #1c4d6b;border-radius:50%;box-sizing:border-box"></div>
<div style="left:1366.3px;top:737.6px;width:5px;height:5.2px;border:1.7px solid #1c4d6b;border-radius:50%;box-sizing:border-box"></div>
<div style="left:1412.3px;top:737.6px;width:5px;height:5.2px;border:1.7px solid #1c4d6b;border-radius:50%;box-sizing:border-box"></div>
<div style="left:1436px;top:728px;width:92px;height:24px;color:#1c4d6b;line-height:17px;box-sizing:border-box;overflow:hidden;text-align:center;padding-top:4px;font-size:12px;-webkit-text-stroke:0.2px #1c4d6b;letter-spacing:0.80px;display:flex;justify-content:center">633,786</div>
<div style="left:1528px;top:728px;width:78px;height:24px;color:#1c4d6b;line-height:17px;box-sizing:border-box;overflow:hidden;text-align:center;padding-top:4px;font-size:12px;-webkit-text-stroke:0.2px #1c4d6b;letter-spacing:0.80px;display:flex;justify-content:center">8,965,709</div>
<div style="left:1606px;top:728px;width:59px;height:24px;color:#1c4d6b;line-height:17px;box-sizing:border-box;overflow:hidden;text-align:center;padding-top:4px;font-size:12px;-webkit-text-stroke:0.2px #1c4d6b;letter-spacing:0.80px;display:flex;justify-content:center">70,690</div>
<div style="left:1665px;top:728px;width:58px;height:24px;color:#1c4d6b;line-height:17px;box-sizing:border-box;overflow:hidden;text-align:center;padding-top:4px;font-size:12px;-webkit-text-stroke:0.2px #1c4d6b;letter-spacing:0.80px;display:flex;justify-content:center">70,757</div>
<div style="left:1723px;top:728px;width:43px;height:24px;color:#1c4d6b;line-height:17px;box-sizing:border-box;overflow:hidden;text-align:center;padding-top:5px;-webkit-text-stroke:0.3px #1c4d6b;display:flex;flex-direction:column;align-items:center"><span class="f c">مجموعه</span></div>
<div style="left:1766px;top:728px;width:118px;height:24px;color:#1c4d6b;line-height:17px;box-sizing:border-box;overflow:hidden;text-align:right;padding:5px 3px 0 0;-webkit-text-stroke:0.2px #1c4d6b"><span class="f">پدال گاز</span></div>
<div style="left:35px;top:752px;width:1850px;height:24px;background:#d1e4f5"></div>
<div style="left:202px;top:752px;width:78px;height:24px;background:#fde29e"></div>
<div style="left:403px;top:752px;width:95px;height:24px;background:#fde29e"></div>
<div style="left:498px;top:752px;width:79px;height:24px;background:#fde29e"></div>
<div style="left:577px;top:752px;width:60px;height:24px;background:#fde29e"></div>
<div style="left:637px;top:752px;width:58px;height:24px;background:#fde29e"></div>
<div style="left:786px;top:752px;width:78px;height:24px;background:#fde29e"></div>
<div style="left:977px;top:752px;width:92px;height:24px;background:#fde29e"></div>
<div style="left:1069px;top:752px;width:78px;height:24px;background:#fde29e"></div>
<div style="left:1147px;top:752px;width:58px;height:24px;background:#fde29e"></div>
<div style="left:1205px;top:752px;width:58px;height:24px;background:#fde29e"></div>
<div style="left:1528px;top:752px;width:78px;height:24px;background:#fde29e"></div>
<div style="left:35px;top:752px;width:75px;height:24px;color:#1c4d6b;line-height:17px;box-sizing:border-box;overflow:hidden;text-align:right;padding:5px 1px 0 0;-webkit-text-stroke:0.3px #1c4d6b"><span class="f">تولید</span></div>
<div style="left:110px;top:752px;width:92px;height:24px;color:#1c4d6b;line-height:17px;box-sizing:border-box;overflow:hidden;text-align:center;padding-top:4px;font-size:12px;-webkit-text-stroke:0.2px #1c4d6b;letter-spacing:0.80px;display:flex;justify-content:center">4,837,406</div>
<div style="left:202px;top:752px;width:78px;height:24px;color:#1c4d6b;line-height:17px;box-sizing:border-box;overflow:hidden;text-align:center;padding-top:4px;font-size:12px;-webkit-text-stroke:0.2px #1c4d6b;letter-spacing:0.80px;display:flex;justify-content:center">7,982,176</div>
<div style="left:280px;top:752px;width:64px;height:24px;color:#1c4d6b;line-height:17px;box-sizing:border-box;overflow:hidden;text-align:center;padding-top:4px;font-size:12px;-webkit-text-stroke:0.2px #1c4d6b;letter-spacing:0.80px;display:flex;justify-content:center">606,026</div>
<div style="left:344px;top:752px;width:59px;height:24px;color:#1c4d6b;line-height:17px;box-sizing:border-box;overflow:hidden;text-align:center;padding-top:4px;font-size:12px;-webkit-text-stroke:0.2px #1c4d6b;letter-spacing:0.80px;display:flex;justify-content:center">549,610</div>
<div style="left:403px;top:752px;width:95px;height:24px;color:#1c4d6b;line-height:17px;box-sizing:border-box;overflow:hidden;text-align:center;padding-top:4px;font-size:12px;-webkit-text-stroke:0.2px #1c4d6b;letter-spacing:0.80px;display:flex;justify-content:center">10,038,585</div>
<div style="left:498px;top:752px;width:79px;height:24px;color:#1c4d6b;line-height:17px;box-sizing:border-box;overflow:hidden;text-align:center;padding-top:4px;font-size:12px;-webkit-text-stroke:0.2px #1c4d6b;letter-spacing:0.80px;display:flex;justify-content:center">17,272,823</div>
<div style="left:577px;top:752px;width:60px;height:24px;color:#1c4d6b;line-height:17px;box-sizing:border-box;overflow:hidden;text-align:center;padding-top:4px;font-size:12px;-webkit-text-stroke:0.2px #1c4d6b;letter-spacing:0.80px;display:flex;justify-content:center">581,178</div>
<div style="left:637px;top:752px;width:58px;height:24px;color:#1c4d6b;line-height:17px;box-sizing:border-box;overflow:hidden;text-align:center;padding-top:4px;font-size:12px;-webkit-text-stroke:0.2px #1c4d6b;letter-spacing:0.80px;display:flex;justify-content:center">535,374</div>
<div style="left:695px;top:752px;width:91px;height:24px;color:#1c4d6b;line-height:17px;box-sizing:border-box;overflow:hidden;text-align:center;padding-top:4px;font-size:12px;-webkit-text-stroke:0.2px #1c4d6b;letter-spacing:0.80px;display:flex;justify-content:center">2,201,284</div>
<div style="left:786px;top:752px;width:78px;height:24px;color:#1c4d6b;line-height:17px;box-sizing:border-box;overflow:hidden;text-align:center;padding-top:4px;font-size:12px;-webkit-text-stroke:0.2px #1c4d6b;letter-spacing:0.80px;display:flex;justify-content:center">26,668,007</div>
<div style="left:864px;top:752px;width:58px;height:24px;color:#1c4d6b;line-height:17px;box-sizing:border-box;overflow:hidden;text-align:center;padding-top:4px;font-size:12px;-webkit-text-stroke:0.2px #1c4d6b;letter-spacing:0.80px;display:flex;justify-content:center">82,544</div>
<div style="left:922px;top:752px;width:55px;height:24px;color:#1c4d6b;line-height:17px;box-sizing:border-box;overflow:hidden;text-align:center;padding-top:4px;font-size:12px;-webkit-text-stroke:0.2px #1c4d6b;letter-spacing:0.80px;display:flex;justify-content:center">87,474</div>
<div style="left:977px;top:752px;width:92px;height:24px;color:#1c4d6b;line-height:17px;box-sizing:border-box;overflow:hidden;text-align:center;padding-top:4px;font-size:12px;-webkit-text-stroke:0.2px #1c4d6b;letter-spacing:0.80px;display:flex;justify-content:center">7,837,301</div>
<div style="left:1069px;top:752px;width:78px;height:24px;color:#1c4d6b;line-height:17px;box-sizing:border-box;overflow:hidden;text-align:center;padding-top:4px;font-size:12px;-webkit-text-stroke:0.2px #1c4d6b;letter-spacing:0.80px;display:flex;justify-content:center">15,717,542</div>
<div style="left:1147px;top:752px;width:58px;height:24px;color:#1c4d6b;line-height:17px;box-sizing:border-box;overflow:hidden;text-align:center;padding-top:4px;font-size:12px;-webkit-text-stroke:0.2px #1c4d6b;letter-spacing:0.80px;display:flex;justify-content:center">498,634</div>
<div style="left:1205px;top:752px;width:58px;height:24px;color:#1c4d6b;line-height:17px;box-sizing:border-box;overflow:hidden;text-align:center;padding-top:4px;font-size:12px;-webkit-text-stroke:0.2px #1c4d6b;letter-spacing:0.80px;display:flex;justify-content:center">447,900</div>
<div style="left:1301.3px;top:761.6px;width:5px;height:5.2px;border:1.7px solid #1c4d6b;border-radius:50%;box-sizing:border-box"></div>
<div style="left:1366.3px;top:761.6px;width:5px;height:5.2px;border:1.7px solid #1c4d6b;border-radius:50%;box-sizing:border-box"></div>
<div style="left:1412.3px;top:761.6px;width:5px;height:5.2px;border:1.7px solid #1c4d6b;border-radius:50%;box-sizing:border-box"></div>
<div style="left:1436px;top:752px;width:92px;height:24px;color:#1c4d6b;line-height:17px;box-sizing:border-box;overflow:hidden;text-align:center;padding-top:4px;font-size:12px;-webkit-text-stroke:0.2px #1c4d6b;letter-spacing:0.80px;display:flex;justify-content:center">7,837,301</div>
<div style="left:1528px;top:752px;width:78px;height:24px;color:#1c4d6b;line-height:17px;box-sizing:border-box;overflow:hidden;text-align:center;padding-top:4px;font-size:12px;-webkit-text-stroke:0.2px #1c4d6b;letter-spacing:0.80px;display:flex;justify-content:center">15,717,542</div>
<div style="left:1606px;top:752px;width:59px;height:24px;color:#1c4d6b;line-height:17px;box-sizing:border-box;overflow:hidden;text-align:center;padding-top:4px;font-size:12px;-webkit-text-stroke:0.2px #1c4d6b;letter-spacing:0.80px;display:flex;justify-content:center">498,634</div>
<div style="left:1665px;top:752px;width:58px;height:24px;color:#1c4d6b;line-height:17px;box-sizing:border-box;overflow:hidden;text-align:center;padding-top:4px;font-size:12px;-webkit-text-stroke:0.2px #1c4d6b;letter-spacing:0.80px;display:flex;justify-content:center">447,900</div>
<div style="left:1723px;top:752px;width:43px;height:24px;color:#1c4d6b;line-height:17px;box-sizing:border-box;overflow:hidden;text-align:center;padding-top:5px;-webkit-text-stroke:0.3px #1c4d6b;display:flex;flex-direction:column;align-items:center"><span class="f c">مجموعه</span></div>
<div style="left:1766px;top:752px;width:118px;height:24px;color:#1c4d6b;line-height:17px;box-sizing:border-box;overflow:hidden;text-align:right;padding:5px 3px 0 0;-webkit-text-stroke:0.2px #1c4d6b"><span class="f">سنسورهاي موتور</span></div>
<div style="left:35px;top:776px;width:1850px;height:24px;background:#efefef"></div>
<div style="left:202px;top:776px;width:78px;height:24px;background:#fde29e"></div>
<div style="left:403px;top:776px;width:95px;height:24px;background:#fde29e"></div>
<div style="left:498px;top:776px;width:79px;height:24px;background:#fde29e"></div>
<div style="left:577px;top:776px;width:60px;height:24px;background:#fde29e"></div>
<div style="left:637px;top:776px;width:58px;height:24px;background:#fde29e"></div>
<div style="left:786px;top:776px;width:78px;height:24px;background:#fde29e"></div>
<div style="left:977px;top:776px;width:92px;height:24px;background:#fde29e"></div>
<div style="left:1069px;top:776px;width:78px;height:24px;background:#fde29e"></div>
<div style="left:1147px;top:776px;width:58px;height:24px;background:#fde29e"></div>
<div style="left:1205px;top:776px;width:58px;height:24px;background:#fde29e"></div>
<div style="left:1528px;top:776px;width:78px;height:24px;background:#fde29e"></div>
<div style="left:35px;top:776px;width:75px;height:24px;color:#1c4d6b;line-height:17px;box-sizing:border-box;overflow:hidden;text-align:right;padding:5px 1px 0 0;-webkit-text-stroke:0.3px #1c4d6b"><span class="f">تولید</span></div>
<div style="left:153.8px;top:785.6px;width:5px;height:5.2px;border:1.7px solid #1c4d6b;border-radius:50%;box-sizing:border-box"></div>
<div style="left:238.8px;top:785.6px;width:5px;height:5.2px;border:1.7px solid #1c4d6b;border-radius:50%;box-sizing:border-box"></div>
<div style="left:309.8px;top:785.6px;width:5px;height:5.2px;border:1.7px solid #1c4d6b;border-radius:50%;box-sizing:border-box"></div>
<div style="left:371.3px;top:785.6px;width:5px;height:5.2px;border:1.7px solid #1c4d6b;border-radius:50%;box-sizing:border-box"></div>
<div style="left:448.3px;top:785.6px;width:5px;height:5.2px;border:1.7px solid #1c4d6b;border-radius:50%;box-sizing:border-box"></div>
<div style="left:535.3px;top:785.6px;width:5px;height:5.2px;border:1.7px solid #1c4d6b;border-radius:50%;box-sizing:border-box"></div>
<div style="left:604.8px;top:785.6px;width:5px;height:5.2px;border:1.7px solid #1c4d6b;border-radius:50%;box-sizing:border-box"></div>
<div style="left:663.8px;top:785.6px;width:5px;height:5.2px;border:1.7px solid #1c4d6b;border-radius:50%;box-sizing:border-box"></div>
<div style="left:738.3px;top:785.6px;width:5px;height:5.2px;border:1.7px solid #1c4d6b;border-radius:50%;box-sizing:border-box"></div>
<div style="left:822.8px;top:785.6px;width:5px;height:5.2px;border:1.7px solid #1c4d6b;border-radius:50%;box-sizing:border-box"></div>
<div style="left:1020.8px;top:785.6px;width:5px;height:5.2px;border:1.7px solid #1c4d6b;border-radius:50%;box-sizing:border-box"></div>
<div style="left:1105.8px;top:785.6px;width:5px;height:5.2px;border:1.7px solid #1c4d6b;border-radius:50%;box-sizing:border-box"></div>
<div style="left:1173.8px;top:785.6px;width:5px;height:5.2px;border:1.7px solid #1c4d6b;border-radius:50%;box-sizing:border-box"></div>
<div style="left:1231.8px;top:785.6px;width:5px;height:5.2px;border:1.7px solid #1c4d6b;border-radius:50%;box-sizing:border-box"></div>
<div style="left:1301.3px;top:785.6px;width:5px;height:5.2px;border:1.7px solid #1c4d6b;border-radius:50%;box-sizing:border-box"></div>
<div style="left:1366.3px;top:785.6px;width:5px;height:5.2px;border:1.7px solid #1c4d6b;border-radius:50%;box-sizing:border-box"></div>
<div style="left:1412.3px;top:785.6px;width:5px;height:5.2px;border:1.7px solid #1c4d6b;border-radius:50%;box-sizing:border-box"></div>
<div style="left:1479.8px;top:785.6px;width:5px;height:5.2px;border:1.7px solid #1c4d6b;border-radius:50%;box-sizing:border-box"></div>
<div style="left:1564.8px;top:785.6px;width:5px;height:5.2px;border:1.7px solid #1c4d6b;border-radius:50%;box-sizing:border-box"></div>
<div style="left:1633.3px;top:785.6px;width:5px;height:5.2px;border:1.7px solid #1c4d6b;border-radius:50%;box-sizing:border-box"></div>
<div style="left:1691.8px;top:785.6px;width:5px;height:5.2px;border:1.7px solid #1c4d6b;border-radius:50%;box-sizing:border-box"></div>
<div style="left:1723px;top:776px;width:43px;height:24px;color:#1c4d6b;line-height:17px;box-sizing:border-box;overflow:hidden;text-align:center;padding-top:5px;-webkit-text-stroke:0.3px #1c4d6b;display:flex;flex-direction:column;align-items:center"><span class="f c">مجموعه</span></div>
<div style="left:1766px;top:776px;width:118px;height:24px;color:#1c4d6b;line-height:17px;box-sizing:border-box;overflow:hidden;text-align:right;padding:5px 3px 0 0;-webkit-text-stroke:0.2px #1c4d6b"><span class="f">مجموعه قفل مرکزي</span></div>
<div style="left:35px;top:800px;width:1850px;height:25px;background:#d1e4f5"></div>
<div style="left:202px;top:800px;width:78px;height:25px;background:#fde29e"></div>
<div style="left:403px;top:800px;width:95px;height:25px;background:#fde29e"></div>
<div style="left:498px;top:800px;width:79px;height:25px;background:#fde29e"></div>
<div style="left:577px;top:800px;width:60px;height:25px;background:#fde29e"></div>
<div style="left:637px;top:800px;width:58px;height:25px;background:#fde29e"></div>
<div style="left:786px;top:800px;width:78px;height:25px;background:#fde29e"></div>
<div style="left:977px;top:800px;width:92px;height:25px;background:#fde29e"></div>
<div style="left:1069px;top:800px;width:78px;height:25px;background:#fde29e"></div>
<div style="left:1147px;top:800px;width:58px;height:25px;background:#fde29e"></div>
<div style="left:1205px;top:800px;width:58px;height:25px;background:#fde29e"></div>
<div style="left:1528px;top:800px;width:78px;height:25px;background:#fde29e"></div>
<div style="left:35px;top:800px;width:75px;height:25px;color:#1c4d6b;line-height:17px;box-sizing:border-box;overflow:hidden;text-align:right;padding:5px 1px 0 0;-webkit-text-stroke:0.3px #1c4d6b"><span class="f">تولید</span></div>
<div style="left:110px;top:800px;width:92px;height:25px;color:#1c4d6b;line-height:17px;box-sizing:border-box;overflow:hidden;text-align:center;padding-top:4px;font-size:12px;-webkit-text-stroke:0.2px #1c4d6b;letter-spacing:0.80px;display:flex;justify-content:center">5,145,951</div>
<div style="left:202px;top:800px;width:78px;height:25px;color:#1c4d6b;line-height:17px;box-sizing:border-box;overflow:hidden;text-align:center;padding-top:4px;font-size:12px;-webkit-text-stroke:0.2px #1c4d6b;letter-spacing:0.80px;display:flex;justify-content:center">31,817,373</div>
<div style="left:280px;top:800px;width:64px;height:25px;color:#1c4d6b;line-height:17px;box-sizing:border-box;overflow:hidden;text-align:center;padding-top:4px;font-size:12px;-webkit-text-stroke:0.2px #1c4d6b;letter-spacing:0.80px;display:flex;justify-content:center">161,734</div>
<div style="left:344px;top:800px;width:59px;height:25px;color:#1c4d6b;line-height:17px;box-sizing:border-box;overflow:hidden;text-align:center;padding-top:4px;font-size:12px;-webkit-text-stroke:0.2px #1c4d6b;letter-spacing:0.80px;display:flex;justify-content:center">162,093</div>
<div style="left:403px;top:800px;width:95px;height:25px;color:#1c4d6b;line-height:17px;box-sizing:border-box;overflow:hidden;text-align:center;padding-top:4px;font-size:12px;-webkit-text-stroke:0.2px #1c4d6b;letter-spacing:0.80px;display:flex;justify-content:center">10,072,027</div>
<div style="left:498px;top:800px;width:79px;height:25px;color:#1c4d6b;line-height:17px;box-sizing:border-box;overflow:hidden;text-align:center;padding-top:4px;font-size:12px;-webkit-text-stroke:0.2px #1c4d6b;letter-spacing:0.80px;display:flex;justify-content:center">55,916,254</div>
<div style="left:577px;top:800px;width:60px;height:25px;color:#1c4d6b;line-height:17px;box-sizing:border-box;overflow:hidden;text-align:center;padding-top:4px;font-size:12px;-webkit-text-stroke:0.2px #1c4d6b;letter-spacing:0.80px;display:flex;justify-content:center">180,127</div>
<div style="left:637px;top:800px;width:58px;height:25px;color:#1c4d6b;line-height:17px;box-sizing:border-box;overflow:hidden;text-align:center;padding-top:4px;font-size:12px;-webkit-text-stroke:0.2px #1c4d6b;letter-spacing:0.80px;display:flex;justify-content:center">181,847</div>
<div style="left:695px;top:800px;width:91px;height:25px;color:#1c4d6b;line-height:17px;box-sizing:border-box;overflow:hidden;text-align:center;padding-top:4px;font-size:12px;-webkit-text-stroke:0.2px #1c4d6b;letter-spacing:0.80px;display:flex;justify-content:center">1,438,828</div>
<div style="left:786px;top:800px;width:78px;height:25px;color:#1c4d6b;line-height:17px;box-sizing:border-box;overflow:hidden;text-align:center;padding-top:4px;font-size:12px;-webkit-text-stroke:0.2px #1c4d6b;letter-spacing:0.80px;display:flex;justify-content:center">49,162,128</div>
<div style="left:864px;top:800px;width:58px;height:25px;color:#1c4d6b;line-height:17px;box-sizing:border-box;overflow:hidden;text-align:center;padding-top:4px;font-size:12px;-webkit-text-stroke:0.2px #1c4d6b;letter-spacing:0.80px;display:flex;justify-content:center">29,267</div>
<div style="left:922px;top:800px;width:55px;height:25px;color:#1c4d6b;line-height:17px;box-sizing:border-box;overflow:hidden;text-align:center;padding-top:4px;font-size:12px;-webkit-text-stroke:0.2px #1c4d6b;letter-spacing:0.80px;display:flex;justify-content:center">29,777</div>
<div style="left:977px;top:800px;width:92px;height:25px;color:#1c4d6b;line-height:17px;box-sizing:border-box;overflow:hidden;text-align:center;padding-top:4px;font-size:12px;-webkit-text-stroke:0.2px #1c4d6b;letter-spacing:0.80px;display:flex;justify-content:center">8,633,199</div>
<div style="left:1069px;top:800px;width:78px;height:25px;color:#1c4d6b;line-height:17px;box-sizing:border-box;overflow:hidden;text-align:center;padding-top:4px;font-size:12px;-webkit-text-stroke:0.2px #1c4d6b;letter-spacing:0.80px;display:flex;justify-content:center">57,226,561</div>
<div style="left:1147px;top:800px;width:58px;height:25px;color:#1c4d6b;line-height:17px;box-sizing:border-box;overflow:hidden;text-align:center;padding-top:4px;font-size:12px;-webkit-text-stroke:0.2px #1c4d6b;letter-spacing:0.80px;display:flex;justify-content:center">150,860</div>
<div style="left:1205px;top:800px;width:58px;height:25px;color:#1c4d6b;line-height:17px;box-sizing:border-box;overflow:hidden;text-align:center;padding-top:4px;font-size:12px;-webkit-text-stroke:0.2px #1c4d6b;letter-spacing:0.80px;display:flex;justify-content:center">152,070</div>
<div style="left:1301.3px;top:809.6px;width:5px;height:5.2px;border:1.7px solid #1c4d6b;border-radius:50%;box-sizing:border-box"></div>
<div style="left:1366.3px;top:809.6px;width:5px;height:5.2px;border:1.7px solid #1c4d6b;border-radius:50%;box-sizing:border-box"></div>
<div style="left:1412.3px;top:809.6px;width:5px;height:5.2px;border:1.7px solid #1c4d6b;border-radius:50%;box-sizing:border-box"></div>
<div style="left:1436px;top:800px;width:92px;height:25px;color:#1c4d6b;line-height:17px;box-sizing:border-box;overflow:hidden;text-align:center;padding-top:4px;font-size:12px;-webkit-text-stroke:0.2px #1c4d6b;letter-spacing:0.80px;display:flex;justify-content:center">8,633,199</div>
<div style="left:1528px;top:800px;width:78px;height:25px;color:#1c4d6b;line-height:17px;box-sizing:border-box;overflow:hidden;text-align:center;padding-top:4px;font-size:12px;-webkit-text-stroke:0.2px #1c4d6b;letter-spacing:0.80px;display:flex;justify-content:center">57,226,561</div>
<div style="left:1606px;top:800px;width:59px;height:25px;color:#1c4d6b;line-height:17px;box-sizing:border-box;overflow:hidden;text-align:center;padding-top:4px;font-size:12px;-webkit-text-stroke:0.2px #1c4d6b;letter-spacing:0.80px;display:flex;justify-content:center">150,860</div>
<div style="left:1665px;top:800px;width:58px;height:25px;color:#1c4d6b;line-height:17px;box-sizing:border-box;overflow:hidden;text-align:center;padding-top:4px;font-size:12px;-webkit-text-stroke:0.2px #1c4d6b;letter-spacing:0.80px;display:flex;justify-content:center">152,070</div>
<div style="left:1723px;top:800px;width:43px;height:25px;color:#1c4d6b;line-height:17px;box-sizing:border-box;overflow:hidden;text-align:center;padding-top:5px;-webkit-text-stroke:0.3px #1c4d6b;display:flex;flex-direction:column;align-items:center"><span class="f c">مجموعه</span></div>
<div style="left:1766px;top:800px;width:118px;height:25px;color:#1c4d6b;line-height:17px;box-sizing:border-box;overflow:hidden;text-align:right;padding:5px 3px 0 0;-webkit-text-stroke:0.2px #1c4d6b"><span class="f">مجموعه نود ها</span></div>
<div style="left:35px;top:825px;width:1850px;height:24px;background:#efefef"></div>
<div style="left:202px;top:825px;width:78px;height:24px;background:#fde29e"></div>
<div style="left:403px;top:825px;width:95px;height:24px;background:#fde29e"></div>
<div style="left:498px;top:825px;width:79px;height:24px;background:#fde29e"></div>
<div style="left:577px;top:825px;width:60px;height:24px;background:#fde29e"></div>
<div style="left:637px;top:825px;width:58px;height:24px;background:#fde29e"></div>
<div style="left:786px;top:825px;width:78px;height:24px;background:#fde29e"></div>
<div style="left:977px;top:825px;width:92px;height:24px;background:#fde29e"></div>
<div style="left:1069px;top:825px;width:78px;height:24px;background:#fde29e"></div>
<div style="left:1147px;top:825px;width:58px;height:24px;background:#fde29e"></div>
<div style="left:1205px;top:825px;width:58px;height:24px;background:#fde29e"></div>
<div style="left:1528px;top:825px;width:78px;height:24px;background:#fde29e"></div>
<div style="left:35px;top:825px;width:75px;height:24px;color:#1c4d6b;line-height:17px;box-sizing:border-box;overflow:hidden;text-align:right;padding:5px 1px 0 0;-webkit-text-stroke:0.3px #1c4d6b"><span class="f">تولید</span></div>
<div style="left:110px;top:825px;width:92px;height:24px;color:#1c4d6b;line-height:17px;box-sizing:border-box;overflow:hidden;text-align:center;padding-top:4px;font-size:12px;-webkit-text-stroke:0.2px #1c4d6b;letter-spacing:0.80px;display:flex;justify-content:center">4,009,001</div>
<div style="left:202px;top:825px;width:78px;height:24px;color:#1c4d6b;line-height:17px;box-sizing:border-box;overflow:hidden;text-align:center;padding-top:4px;font-size:12px;-webkit-text-stroke:0.2px #1c4d6b;letter-spacing:0.80px;display:flex;justify-content:center">19,591,654</div>
<div style="left:280px;top:825px;width:64px;height:24px;color:#1c4d6b;line-height:17px;box-sizing:border-box;overflow:hidden;text-align:center;padding-top:4px;font-size:12px;-webkit-text-stroke:0.2px #1c4d6b;letter-spacing:0.80px;display:flex;justify-content:center">204,628</div>
<div style="left:344px;top:825px;width:59px;height:24px;color:#1c4d6b;line-height:17px;box-sizing:border-box;overflow:hidden;text-align:center;padding-top:4px;font-size:12px;-webkit-text-stroke:0.2px #1c4d6b;letter-spacing:0.80px;display:flex;justify-content:center">204,137</div>
<div style="left:403px;top:825px;width:95px;height:24px;color:#1c4d6b;line-height:17px;box-sizing:border-box;overflow:hidden;text-align:center;padding-top:4px;font-size:12px;-webkit-text-stroke:0.2px #1c4d6b;letter-spacing:0.80px;display:flex;justify-content:center">6,447,087</div>
<div style="left:498px;top:825px;width:79px;height:24px;color:#1c4d6b;line-height:17px;box-sizing:border-box;overflow:hidden;text-align:center;padding-top:4px;font-size:12px;-webkit-text-stroke:0.2px #1c4d6b;letter-spacing:0.80px;display:flex;justify-content:center">30,608,298</div>
<div style="left:577px;top:825px;width:60px;height:24px;color:#1c4d6b;line-height:17px;box-sizing:border-box;overflow:hidden;text-align:center;padding-top:4px;font-size:12px;-webkit-text-stroke:0.2px #1c4d6b;letter-spacing:0.80px;display:flex;justify-content:center">210,632</div>
<div style="left:637px;top:825px;width:58px;height:24px;color:#1c4d6b;line-height:17px;box-sizing:border-box;overflow:hidden;text-align:center;padding-top:4px;font-size:12px;-webkit-text-stroke:0.2px #1c4d6b;letter-spacing:0.80px;display:flex;justify-content:center">211,362</div>
<div style="left:695px;top:825px;width:91px;height:24px;color:#1c4d6b;line-height:17px;box-sizing:border-box;overflow:hidden;text-align:center;padding-top:4px;font-size:12px;-webkit-text-stroke:0.2px #1c4d6b;letter-spacing:0.80px;display:flex;justify-content:center">891,585</div>
<div style="left:786px;top:825px;width:78px;height:24px;color:#1c4d6b;line-height:17px;box-sizing:border-box;overflow:hidden;text-align:center;padding-top:4px;font-size:12px;-webkit-text-stroke:0.2px #1c4d6b;letter-spacing:0.80px;display:flex;justify-content:center">29,801,952</div>
<div style="left:864px;top:825px;width:58px;height:24px;color:#1c4d6b;line-height:17px;box-sizing:border-box;overflow:hidden;text-align:center;padding-top:4px;font-size:12px;-webkit-text-stroke:0.2px #1c4d6b;letter-spacing:0.80px;display:flex;justify-content:center">29,917</div>
<div style="left:922px;top:825px;width:55px;height:24px;color:#1c4d6b;line-height:17px;box-sizing:border-box;overflow:hidden;text-align:center;padding-top:4px;font-size:12px;-webkit-text-stroke:0.2px #1c4d6b;letter-spacing:0.80px;display:flex;justify-content:center">30,527</div>
<div style="left:977px;top:825px;width:92px;height:24px;color:#1c4d6b;line-height:17px;box-sizing:border-box;overflow:hidden;text-align:center;padding-top:4px;font-size:12px;-webkit-text-stroke:0.2px #1c4d6b;letter-spacing:0.80px;display:flex;justify-content:center">5,555,502</div>
<div style="left:1069px;top:825px;width:78px;height:24px;color:#1c4d6b;line-height:17px;box-sizing:border-box;overflow:hidden;text-align:center;padding-top:4px;font-size:12px;-webkit-text-stroke:0.2px #1c4d6b;letter-spacing:0.80px;display:flex;justify-content:center">30,741,787</div>
<div style="left:1147px;top:825px;width:58px;height:24px;color:#1c4d6b;line-height:17px;box-sizing:border-box;overflow:hidden;text-align:center;padding-top:4px;font-size:12px;-webkit-text-stroke:0.2px #1c4d6b;letter-spacing:0.80px;display:flex;justify-content:center">180,715</div>
<div style="left:1205px;top:825px;width:58px;height:24px;color:#1c4d6b;line-height:17px;box-sizing:border-box;overflow:hidden;text-align:center;padding-top:4px;font-size:12px;-webkit-text-stroke:0.2px #1c4d6b;letter-spacing:0.80px;display:flex;justify-content:center">180,835</div>
<div style="left:1301.3px;top:834.6px;width:5px;height:5.2px;border:1.7px solid #1c4d6b;border-radius:50%;box-sizing:border-box"></div>
<div style="left:1366.3px;top:834.6px;width:5px;height:5.2px;border:1.7px solid #1c4d6b;border-radius:50%;box-sizing:border-box"></div>
<div style="left:1412.3px;top:834.6px;width:5px;height:5.2px;border:1.7px solid #1c4d6b;border-radius:50%;box-sizing:border-box"></div>
<div style="left:1436px;top:825px;width:92px;height:24px;color:#1c4d6b;line-height:17px;box-sizing:border-box;overflow:hidden;text-align:center;padding-top:4px;font-size:12px;-webkit-text-stroke:0.2px #1c4d6b;letter-spacing:0.80px;display:flex;justify-content:center">5,555,502</div>
<div style="left:1528px;top:825px;width:78px;height:24px;color:#1c4d6b;line-height:17px;box-sizing:border-box;overflow:hidden;text-align:center;padding-top:4px;font-size:12px;-webkit-text-stroke:0.2px #1c4d6b;letter-spacing:0.80px;display:flex;justify-content:center">30,741,787</div>
<div style="left:1606px;top:825px;width:59px;height:24px;color:#1c4d6b;line-height:17px;box-sizing:border-box;overflow:hidden;text-align:center;padding-top:4px;font-size:12px;-webkit-text-stroke:0.2px #1c4d6b;letter-spacing:0.80px;display:flex;justify-content:center">180,715</div>
<div style="left:1665px;top:825px;width:58px;height:24px;color:#1c4d6b;line-height:17px;box-sizing:border-box;overflow:hidden;text-align:center;padding-top:4px;font-size:12px;-webkit-text-stroke:0.2px #1c4d6b;letter-spacing:0.80px;display:flex;justify-content:center">180,835</div>
<div style="left:1723px;top:825px;width:43px;height:24px;color:#1c4d6b;line-height:17px;box-sizing:border-box;overflow:hidden;text-align:center;padding-top:5px;-webkit-text-stroke:0.3px #1c4d6b;display:flex;flex-direction:column;align-items:center"><span class="f c">مجموعه</span></div>
<div style="left:1766px;top:825px;width:118px;height:24px;color:#1c4d6b;line-height:17px;box-sizing:border-box;overflow:hidden;text-align:right;padding:5px 3px 0 0;-webkit-text-stroke:0.2px #1c4d6b"><span class="f">جلو آمپر پژو پراید</span></div>
<div style="left:35px;top:849px;width:1850px;height:41px;background:#d1e4f5"></div>
<div style="left:202px;top:849px;width:78px;height:41px;background:#fde29e"></div>
<div style="left:403px;top:849px;width:95px;height:41px;background:#fde29e"></div>
<div style="left:498px;top:849px;width:79px;height:41px;background:#fde29e"></div>
<div style="left:577px;top:849px;width:60px;height:41px;background:#fde29e"></div>
<div style="left:637px;top:849px;width:58px;height:41px;background:#fde29e"></div>
<div style="left:786px;top:849px;width:78px;height:41px;background:#fde29e"></div>
<div style="left:977px;top:849px;width:92px;height:41px;background:#fde29e"></div>
<div style="left:1069px;top:849px;width:78px;height:41px;background:#fde29e"></div>
<div style="left:1147px;top:849px;width:58px;height:41px;background:#fde29e"></div>
<div style="left:1205px;top:849px;width:58px;height:41px;background:#fde29e"></div>
<div style="left:1528px;top:849px;width:78px;height:41px;background:#fde29e"></div>
<div style="left:35px;top:849px;width:75px;height:41px;color:#1c4d6b;line-height:17px;box-sizing:border-box;overflow:hidden;text-align:right;padding:5px 1px 0 0;-webkit-text-stroke:0.3px #1c4d6b"><span class="f">تولید</span></div>
<div style="left:153.8px;top:858.6px;width:5px;height:5.2px;border:1.7px solid #1c4d6b;border-radius:50%;box-sizing:border-box"></div>
<div style="left:238.8px;top:858.6px;width:5px;height:5.2px;border:1.7px solid #1c4d6b;border-radius:50%;box-sizing:border-box"></div>
<div style="left:309.8px;top:858.6px;width:5px;height:5.2px;border:1.7px solid #1c4d6b;border-radius:50%;box-sizing:border-box"></div>
<div style="left:371.3px;top:858.6px;width:5px;height:5.2px;border:1.7px solid #1c4d6b;border-radius:50%;box-sizing:border-box"></div>
<div style="left:448.3px;top:858.6px;width:5px;height:5.2px;border:1.7px solid #1c4d6b;border-radius:50%;box-sizing:border-box"></div>
<div style="left:535.3px;top:858.6px;width:5px;height:5.2px;border:1.7px solid #1c4d6b;border-radius:50%;box-sizing:border-box"></div>
<div style="left:604.8px;top:858.6px;width:5px;height:5.2px;border:1.7px solid #1c4d6b;border-radius:50%;box-sizing:border-box"></div>
<div style="left:663.8px;top:858.6px;width:5px;height:5.2px;border:1.7px solid #1c4d6b;border-radius:50%;box-sizing:border-box"></div>
<div style="left:738.3px;top:858.6px;width:5px;height:5.2px;border:1.7px solid #1c4d6b;border-radius:50%;box-sizing:border-box"></div>
<div style="left:822.8px;top:858.6px;width:5px;height:5.2px;border:1.7px solid #1c4d6b;border-radius:50%;box-sizing:border-box"></div>
<div style="left:1020.8px;top:858.6px;width:5px;height:5.2px;border:1.7px solid #1c4d6b;border-radius:50%;box-sizing:border-box"></div>
<div style="left:1105.8px;top:858.6px;width:5px;height:5.2px;border:1.7px solid #1c4d6b;border-radius:50%;box-sizing:border-box"></div>
<div style="left:1173.8px;top:858.6px;width:5px;height:5.2px;border:1.7px solid #1c4d6b;border-radius:50%;box-sizing:border-box"></div>
<div style="left:1231.8px;top:858.6px;width:5px;height:5.2px;border:1.7px solid #1c4d6b;border-radius:50%;box-sizing:border-box"></div>
<div style="left:1301.3px;top:858.6px;width:5px;height:5.2px;border:1.7px solid #1c4d6b;border-radius:50%;box-sizing:border-box"></div>
<div style="left:1366.3px;top:858.6px;width:5px;height:5.2px;border:1.7px solid #1c4d6b;border-radius:50%;box-sizing:border-box"></div>
<div style="left:1412.3px;top:858.6px;width:5px;height:5.2px;border:1.7px solid #1c4d6b;border-radius:50%;box-sizing:border-box"></div>
<div style="left:1479.8px;top:858.6px;width:5px;height:5.2px;border:1.7px solid #1c4d6b;border-radius:50%;box-sizing:border-box"></div>
<div style="left:1564.8px;top:858.6px;width:5px;height:5.2px;border:1.7px solid #1c4d6b;border-radius:50%;box-sizing:border-box"></div>
<div style="left:1633.3px;top:858.6px;width:5px;height:5.2px;border:1.7px solid #1c4d6b;border-radius:50%;box-sizing:border-box"></div>
<div style="left:1691.8px;top:858.6px;width:5px;height:5.2px;border:1.7px solid #1c4d6b;border-radius:50%;box-sizing:border-box"></div>
<div style="left:1723px;top:849px;width:43px;height:41px;color:#1c4d6b;line-height:17px;box-sizing:border-box;overflow:hidden;text-align:center;padding-top:5px;-webkit-text-stroke:0.3px #1c4d6b;display:flex;flex-direction:column;align-items:center"><span class="f c">مجموعه</span></div>
<div style="left:1766px;top:849px;width:118px;height:41px;color:#1c4d6b;line-height:17px;box-sizing:border-box;overflow:hidden;text-align:right;padding:5px 3px 0 0;-webkit-text-stroke:0.2px #1c4d6b"><span class="f">گیرنده فرستنده قفل</span><br><span class="f">درب خودرو</span></div>
<div style="left:35px;top:890px;width:1850px;height:41px;background:#efefef"></div>
<div style="left:202px;top:890px;width:78px;height:41px;background:#fde29e"></div>
<div style="left:403px;top:890px;width:95px;height:41px;background:#fde29e"></div>
<div style="left:498px;top:890px;width:79px;height:41px;background:#fde29e"></div>
<div style="left:577px;top:890px;width:60px;height:41px;background:#fde29e"></div>
<div style="left:637px;top:890px;width:58px;height:41px;background:#fde29e"></div>
<div style="left:786px;top:890px;width:78px;height:41px;background:#fde29e"></div>
<div style="left:977px;top:890px;width:92px;height:41px;background:#fde29e"></div>
<div style="left:1069px;top:890px;width:78px;height:41px;background:#fde29e"></div>
<div style="left:1147px;top:890px;width:58px;height:41px;background:#fde29e"></div>
<div style="left:1205px;top:890px;width:58px;height:41px;background:#fde29e"></div>
<div style="left:1528px;top:890px;width:78px;height:41px;background:#fde29e"></div>
<div style="left:35px;top:890px;width:75px;height:41px;color:#1c4d6b;line-height:17px;box-sizing:border-box;overflow:hidden;text-align:right;padding:5px 1px 0 0;-webkit-text-stroke:0.3px #1c4d6b"><span class="f">تولید</span></div>
<div style="left:153.8px;top:899.6px;width:5px;height:5.2px;border:1.7px solid #1c4d6b;border-radius:50%;box-sizing:border-box"></div>
<div style="left:238.8px;top:899.6px;width:5px;height:5.2px;border:1.7px solid #1c4d6b;border-radius:50%;box-sizing:border-box"></div>
<div style="left:309.8px;top:899.6px;width:5px;height:5.2px;border:1.7px solid #1c4d6b;border-radius:50%;box-sizing:border-box"></div>
<div style="left:371.3px;top:899.6px;width:5px;height:5.2px;border:1.7px solid #1c4d6b;border-radius:50%;box-sizing:border-box"></div>
<div style="left:448.3px;top:899.6px;width:5px;height:5.2px;border:1.7px solid #1c4d6b;border-radius:50%;box-sizing:border-box"></div>
<div style="left:535.3px;top:899.6px;width:5px;height:5.2px;border:1.7px solid #1c4d6b;border-radius:50%;box-sizing:border-box"></div>
<div style="left:604.8px;top:899.6px;width:5px;height:5.2px;border:1.7px solid #1c4d6b;border-radius:50%;box-sizing:border-box"></div>
<div style="left:663.8px;top:899.6px;width:5px;height:5.2px;border:1.7px solid #1c4d6b;border-radius:50%;box-sizing:border-box"></div>
<div style="left:738.3px;top:899.6px;width:5px;height:5.2px;border:1.7px solid #1c4d6b;border-radius:50%;box-sizing:border-box"></div>
<div style="left:822.8px;top:899.6px;width:5px;height:5.2px;border:1.7px solid #1c4d6b;border-radius:50%;box-sizing:border-box"></div>
<div style="left:1020.8px;top:899.6px;width:5px;height:5.2px;border:1.7px solid #1c4d6b;border-radius:50%;box-sizing:border-box"></div>
<div style="left:1105.8px;top:899.6px;width:5px;height:5.2px;border:1.7px solid #1c4d6b;border-radius:50%;box-sizing:border-box"></div>
<div style="left:1173.8px;top:899.6px;width:5px;height:5.2px;border:1.7px solid #1c4d6b;border-radius:50%;box-sizing:border-box"></div>
<div style="left:1231.8px;top:899.6px;width:5px;height:5.2px;border:1.7px solid #1c4d6b;border-radius:50%;box-sizing:border-box"></div>
<div style="left:1301.3px;top:899.6px;width:5px;height:5.2px;border:1.7px solid #1c4d6b;border-radius:50%;box-sizing:border-box"></div>
<div style="left:1366.3px;top:899.6px;width:5px;height:5.2px;border:1.7px solid #1c4d6b;border-radius:50%;box-sizing:border-box"></div>
<div style="left:1412.3px;top:899.6px;width:5px;height:5.2px;border:1.7px solid #1c4d6b;border-radius:50%;box-sizing:border-box"></div>
<div style="left:1479.8px;top:899.6px;width:5px;height:5.2px;border:1.7px solid #1c4d6b;border-radius:50%;box-sizing:border-box"></div>
<div style="left:1564.8px;top:899.6px;width:5px;height:5.2px;border:1.7px solid #1c4d6b;border-radius:50%;box-sizing:border-box"></div>
<div style="left:1633.3px;top:899.6px;width:5px;height:5.2px;border:1.7px solid #1c4d6b;border-radius:50%;box-sizing:border-box"></div>
<div style="left:1691.8px;top:899.6px;width:5px;height:5.2px;border:1.7px solid #1c4d6b;border-radius:50%;box-sizing:border-box"></div>
<div style="left:1723px;top:890px;width:43px;height:41px;color:#1c4d6b;line-height:17px;box-sizing:border-box;overflow:hidden;text-align:center;padding-top:5px;-webkit-text-stroke:0.3px #1c4d6b;display:flex;flex-direction:column;align-items:center"><span class="f c">مجموعه</span></div>
<div style="left:1766px;top:890px;width:118px;height:41px;color:#1c4d6b;line-height:17px;box-sizing:border-box;overflow:hidden;text-align:right;padding:5px 3px 0 0;-webkit-text-stroke:0.2px #1c4d6b"><span class="f">سنسورهاي موانع عقب</span><br><span class="f">خودرو</span></div>
<div style="left:35px;top:931px;width:1850px;height:24px;background:#d1e4f5"></div>
<div style="left:202px;top:931px;width:78px;height:24px;background:#fde29e"></div>
<div style="left:403px;top:931px;width:95px;height:24px;background:#fde29e"></div>
<div style="left:498px;top:931px;width:79px;height:24px;background:#fde29e"></div>
<div style="left:577px;top:931px;width:60px;height:24px;background:#fde29e"></div>
<div style="left:637px;top:931px;width:58px;height:24px;background:#fde29e"></div>
<div style="left:786px;top:931px;width:78px;height:24px;background:#fde29e"></div>
<div style="left:977px;top:931px;width:92px;height:24px;background:#fde29e"></div>
<div style="left:1069px;top:931px;width:78px;height:24px;background:#fde29e"></div>
<div style="left:1147px;top:931px;width:58px;height:24px;background:#fde29e"></div>
<div style="left:1205px;top:931px;width:58px;height:24px;background:#fde29e"></div>
<div style="left:1528px;top:931px;width:78px;height:24px;background:#fde29e"></div>
<div style="left:35px;top:931px;width:75px;height:24px;color:#1c4d6b;line-height:17px;box-sizing:border-box;overflow:hidden;text-align:right;padding:5px 1px 0 0;-webkit-text-stroke:0.3px #1c4d6b"><span class="f">تولید</span></div>
<div style="left:110px;top:931px;width:92px;height:24px;color:#1c4d6b;line-height:17px;box-sizing:border-box;overflow:hidden;text-align:center;padding-top:4px;font-size:12px;-webkit-text-stroke:0.2px #1c4d6b;letter-spacing:0.80px;display:flex;justify-content:center">1,233,656</div>
<div style="left:202px;top:931px;width:78px;height:24px;color:#1c4d6b;line-height:17px;box-sizing:border-box;overflow:hidden;text-align:center;padding-top:4px;font-size:12px;-webkit-text-stroke:0.2px #1c4d6b;letter-spacing:0.80px;display:flex;justify-content:center">19,480,419</div>
<div style="left:280px;top:931px;width:64px;height:24px;color:#1c4d6b;line-height:17px;box-sizing:border-box;overflow:hidden;text-align:center;padding-top:4px;font-size:12px;-webkit-text-stroke:0.2px #1c4d6b;letter-spacing:0.80px;display:flex;justify-content:center">63,328</div>
<div style="left:344px;top:931px;width:59px;height:24px;color:#1c4d6b;line-height:17px;box-sizing:border-box;overflow:hidden;text-align:center;padding-top:4px;font-size:12px;-webkit-text-stroke:0.2px #1c4d6b;letter-spacing:0.80px;display:flex;justify-content:center">57,775</div>
<div style="left:403px;top:931px;width:95px;height:24px;color:#1c4d6b;line-height:17px;box-sizing:border-box;overflow:hidden;text-align:center;padding-top:4px;font-size:12px;-webkit-text-stroke:0.2px #1c4d6b;letter-spacing:0.80px;display:flex;justify-content:center">1,413,498</div>
<div style="left:498px;top:931px;width:79px;height:24px;color:#1c4d6b;line-height:17px;box-sizing:border-box;overflow:hidden;text-align:center;padding-top:4px;font-size:12px;-webkit-text-stroke:0.2px #1c4d6b;letter-spacing:0.80px;display:flex;justify-content:center">26,855,227</div>
<div style="left:577px;top:931px;width:60px;height:24px;color:#1c4d6b;line-height:17px;box-sizing:border-box;overflow:hidden;text-align:center;padding-top:4px;font-size:12px;-webkit-text-stroke:0.2px #1c4d6b;letter-spacing:0.80px;display:flex;justify-content:center">52,634</div>
<div style="left:637px;top:931px;width:58px;height:24px;color:#1c4d6b;line-height:17px;box-sizing:border-box;overflow:hidden;text-align:center;padding-top:4px;font-size:12px;-webkit-text-stroke:0.2px #1c4d6b;letter-spacing:0.80px;display:flex;justify-content:center">52,105</div>
<div style="left:695px;top:931px;width:91px;height:24px;color:#1c4d6b;line-height:17px;box-sizing:border-box;overflow:hidden;text-align:center;padding-top:4px;font-size:12px;-webkit-text-stroke:0.2px #1c4d6b;letter-spacing:0.80px;display:flex;justify-content:center">207,906</div>
<div style="left:786px;top:931px;width:78px;height:24px;color:#1c4d6b;line-height:17px;box-sizing:border-box;overflow:hidden;text-align:center;padding-top:4px;font-size:12px;-webkit-text-stroke:0.2px #1c4d6b;letter-spacing:0.80px;display:flex;justify-content:center">25,003,728</div>
<div style="left:864px;top:931px;width:58px;height:24px;color:#1c4d6b;line-height:17px;box-sizing:border-box;overflow:hidden;text-align:center;padding-top:4px;font-size:12px;-webkit-text-stroke:0.2px #1c4d6b;letter-spacing:0.80px;display:flex;justify-content:center">8,315</div>
<div style="left:922px;top:931px;width:55px;height:24px;color:#1c4d6b;line-height:17px;box-sizing:border-box;overflow:hidden;text-align:center;padding-top:4px;font-size:12px;-webkit-text-stroke:0.2px #1c4d6b;letter-spacing:0.80px;display:flex;justify-content:center">7,734</div>
<div style="left:977px;top:931px;width:92px;height:24px;color:#1c4d6b;line-height:17px;box-sizing:border-box;overflow:hidden;text-align:center;padding-top:4px;font-size:12px;-webkit-text-stroke:0.2px #1c4d6b;letter-spacing:0.80px;display:flex;justify-content:center">1,205,592</div>
<div style="left:1069px;top:931px;width:78px;height:24px;color:#1c4d6b;line-height:17px;box-sizing:border-box;overflow:hidden;text-align:center;padding-top:4px;font-size:12px;-webkit-text-stroke:0.2px #1c4d6b;letter-spacing:0.80px;display:flex;justify-content:center">27,202,599</div>
<div style="left:1147px;top:931px;width:58px;height:24px;color:#1c4d6b;line-height:17px;box-sizing:border-box;overflow:hidden;text-align:center;padding-top:4px;font-size:12px;-webkit-text-stroke:0.2px #1c4d6b;letter-spacing:0.80px;display:flex;justify-content:center">44,319</div>
<div style="left:1205px;top:931px;width:58px;height:24px;color:#1c4d6b;line-height:17px;box-sizing:border-box;overflow:hidden;text-align:center;padding-top:4px;font-size:12px;-webkit-text-stroke:0.2px #1c4d6b;letter-spacing:0.80px;display:flex;justify-content:center">44,371</div>
<div style="left:1301.3px;top:940.6px;width:5px;height:5.2px;border:1.7px solid #1c4d6b;border-radius:50%;box-sizing:border-box"></div>
<div style="left:1366.3px;top:940.6px;width:5px;height:5.2px;border:1.7px solid #1c4d6b;border-radius:50%;box-sizing:border-box"></div>
<div style="left:1412.3px;top:940.6px;width:5px;height:5.2px;border:1.7px solid #1c4d6b;border-radius:50%;box-sizing:border-box"></div>
<div style="left:1436px;top:931px;width:92px;height:24px;color:#1c4d6b;line-height:17px;box-sizing:border-box;overflow:hidden;text-align:center;padding-top:4px;font-size:12px;-webkit-text-stroke:0.2px #1c4d6b;letter-spacing:0.80px;display:flex;justify-content:center">1,205,592</div>
<div style="left:1528px;top:931px;width:78px;height:24px;color:#1c4d6b;line-height:17px;box-sizing:border-box;overflow:hidden;text-align:center;padding-top:4px;font-size:12px;-webkit-text-stroke:0.2px #1c4d6b;letter-spacing:0.80px;display:flex;justify-content:center">27,202,599</div>
<div style="left:1606px;top:931px;width:59px;height:24px;color:#1c4d6b;line-height:17px;box-sizing:border-box;overflow:hidden;text-align:center;padding-top:4px;font-size:12px;-webkit-text-stroke:0.2px #1c4d6b;letter-spacing:0.80px;display:flex;justify-content:center">44,319</div>
<div style="left:1665px;top:931px;width:58px;height:24px;color:#1c4d6b;line-height:17px;box-sizing:border-box;overflow:hidden;text-align:center;padding-top:4px;font-size:12px;-webkit-text-stroke:0.2px #1c4d6b;letter-spacing:0.80px;display:flex;justify-content:center">44,371</div>
<div style="left:1723px;top:931px;width:43px;height:24px;color:#1c4d6b;line-height:17px;box-sizing:border-box;overflow:hidden;text-align:center;padding-top:5px;-webkit-text-stroke:0.3px #1c4d6b;display:flex;flex-direction:column;align-items:center"><span class="f c">مجموعه</span></div>
<div style="left:1766px;top:931px;width:118px;height:24px;color:#1c4d6b;line-height:17px;box-sizing:border-box;overflow:hidden;text-align:right;padding:5px 3px 0 0;-webkit-text-stroke:0.2px #1c4d6b"><span class="f">دریچه گاز برقي</span></div>
<div style="left:35px;top:955px;width:1850px;height:25px;background:#efefef"></div>
<div style="left:202px;top:955px;width:78px;height:25px;background:#fde29e"></div>
<div style="left:403px;top:955px;width:95px;height:25px;background:#fde29e"></div>
<div style="left:498px;top:955px;width:79px;height:25px;background:#fde29e"></div>
<div style="left:577px;top:955px;width:60px;height:25px;background:#fde29e"></div>
<div style="left:637px;top:955px;width:58px;height:25px;background:#fde29e"></div>
<div style="left:786px;top:955px;width:78px;height:25px;background:#fde29e"></div>
<div style="left:977px;top:955px;width:92px;height:25px;background:#fde29e"></div>
<div style="left:1069px;top:955px;width:78px;height:25px;background:#fde29e"></div>
<div style="left:1147px;top:955px;width:58px;height:25px;background:#fde29e"></div>
<div style="left:1205px;top:955px;width:58px;height:25px;background:#fde29e"></div>
<div style="left:1528px;top:955px;width:78px;height:25px;background:#fde29e"></div>
<div style="left:35px;top:955px;width:75px;height:25px;color:#1c4d6b;line-height:17px;box-sizing:border-box;overflow:hidden;text-align:right;padding:5px 1px 0 0;-webkit-text-stroke:0.3px #1c4d6b"><span class="f">تولید</span></div>
<div style="left:153.8px;top:964.6px;width:5px;height:5.2px;border:1.7px solid #1c4d6b;border-radius:50%;box-sizing:border-box"></div>
<div style="left:238.8px;top:964.6px;width:5px;height:5.2px;border:1.7px solid #1c4d6b;border-radius:50%;box-sizing:border-box"></div>
<div style="left:309.8px;top:964.6px;width:5px;height:5.2px;border:1.7px solid #1c4d6b;border-radius:50%;box-sizing:border-box"></div>
<div style="left:371.3px;top:964.6px;width:5px;height:5.2px;border:1.7px solid #1c4d6b;border-radius:50%;box-sizing:border-box"></div>
<div style="left:448.3px;top:964.6px;width:5px;height:5.2px;border:1.7px solid #1c4d6b;border-radius:50%;box-sizing:border-box"></div>
<div style="left:535.3px;top:964.6px;width:5px;height:5.2px;border:1.7px solid #1c4d6b;border-radius:50%;box-sizing:border-box"></div>
<div style="left:604.8px;top:964.6px;width:5px;height:5.2px;border:1.7px solid #1c4d6b;border-radius:50%;box-sizing:border-box"></div>
<div style="left:663.8px;top:964.6px;width:5px;height:5.2px;border:1.7px solid #1c4d6b;border-radius:50%;box-sizing:border-box"></div>
<div style="left:738.3px;top:964.6px;width:5px;height:5.2px;border:1.7px solid #1c4d6b;border-radius:50%;box-sizing:border-box"></div>
<div style="left:822.8px;top:964.6px;width:5px;height:5.2px;border:1.7px solid #1c4d6b;border-radius:50%;box-sizing:border-box"></div>
<div style="left:1020.8px;top:964.6px;width:5px;height:5.2px;border:1.7px solid #1c4d6b;border-radius:50%;box-sizing:border-box"></div>
<div style="left:1105.8px;top:964.6px;width:5px;height:5.2px;border:1.7px solid #1c4d6b;border-radius:50%;box-sizing:border-box"></div>
<div style="left:1173.8px;top:964.6px;width:5px;height:5.2px;border:1.7px solid #1c4d6b;border-radius:50%;box-sizing:border-box"></div>
<div style="left:1231.8px;top:964.6px;width:5px;height:5.2px;border:1.7px solid #1c4d6b;border-radius:50%;box-sizing:border-box"></div>
<div style="left:1301.3px;top:964.6px;width:5px;height:5.2px;border:1.7px solid #1c4d6b;border-radius:50%;box-sizing:border-box"></div>
<div style="left:1366.3px;top:964.6px;width:5px;height:5.2px;border:1.7px solid #1c4d6b;border-radius:50%;box-sizing:border-box"></div>
<div style="left:1412.3px;top:964.6px;width:5px;height:5.2px;border:1.7px solid #1c4d6b;border-radius:50%;box-sizing:border-box"></div>
<div style="left:1479.8px;top:964.6px;width:5px;height:5.2px;border:1.7px solid #1c4d6b;border-radius:50%;box-sizing:border-box"></div>
<div style="left:1564.8px;top:964.6px;width:5px;height:5.2px;border:1.7px solid #1c4d6b;border-radius:50%;box-sizing:border-box"></div>
<div style="left:1633.3px;top:964.6px;width:5px;height:5.2px;border:1.7px solid #1c4d6b;border-radius:50%;box-sizing:border-box"></div>
<div style="left:1691.8px;top:964.6px;width:5px;height:5.2px;border:1.7px solid #1c4d6b;border-radius:50%;box-sizing:border-box"></div>
<div style="left:1723px;top:955px;width:43px;height:25px;color:#1c4d6b;line-height:17px;box-sizing:border-box;overflow:hidden;text-align:center;padding-top:5px;-webkit-text-stroke:0.3px #1c4d6b;display:flex;flex-direction:column;align-items:center"><span class="f c">دستگاه</span></div>
<div style="left:1766px;top:955px;width:118px;height:25px;color:#1c4d6b;line-height:17px;box-sizing:border-box;overflow:hidden;text-align:right;padding:5px 3px 0 0;-webkit-text-stroke:0.2px #1c4d6b"><span class="f">رادیو پخش اتومبیل</span></div>
<div style="left:35px;top:980px;width:1850px;height:24px;background:#d1e4f5"></div>
<div style="left:202px;top:980px;width:78px;height:24px;background:#fde29e"></div>
<div style="left:403px;top:980px;width:95px;height:24px;background:#fde29e"></div>
<div style="left:498px;top:980px;width:79px;height:24px;background:#fde29e"></div>
<div style="left:577px;top:980px;width:60px;height:24px;background:#fde29e"></div>
<div style="left:637px;top:980px;width:58px;height:24px;background:#fde29e"></div>
<div style="left:786px;top:980px;width:78px;height:24px;background:#fde29e"></div>
<div style="left:977px;top:980px;width:92px;height:24px;background:#fde29e"></div>
<div style="left:1069px;top:980px;width:78px;height:24px;background:#fde29e"></div>
<div style="left:1147px;top:980px;width:58px;height:24px;background:#fde29e"></div>
<div style="left:1205px;top:980px;width:58px;height:24px;background:#fde29e"></div>
<div style="left:1528px;top:980px;width:78px;height:24px;background:#fde29e"></div>
<div style="left:35px;top:980px;width:75px;height:24px;color:#1c4d6b;line-height:17px;box-sizing:border-box;overflow:hidden;text-align:right;padding:5px 1px 0 0;-webkit-text-stroke:0.3px #1c4d6b"><span class="f">تولید</span></div>
<div style="left:153.8px;top:989.6px;width:5px;height:5.2px;border:1.7px solid #1c4d6b;border-radius:50%;box-sizing:border-box"></div>
<div style="left:238.8px;top:989.6px;width:5px;height:5.2px;border:1.7px solid #1c4d6b;border-radius:50%;box-sizing:border-box"></div>
<div style="left:309.8px;top:989.6px;width:5px;height:5.2px;border:1.7px solid #1c4d6b;border-radius:50%;box-sizing:border-box"></div>
<div style="left:371.3px;top:989.6px;width:5px;height:5.2px;border:1.7px solid #1c4d6b;border-radius:50%;box-sizing:border-box"></div>
<div style="left:448.3px;top:989.6px;width:5px;height:5.2px;border:1.7px solid #1c4d6b;border-radius:50%;box-sizing:border-box"></div>
<div style="left:535.3px;top:989.6px;width:5px;height:5.2px;border:1.7px solid #1c4d6b;border-radius:50%;box-sizing:border-box"></div>
<div style="left:604.8px;top:989.6px;width:5px;height:5.2px;border:1.7px solid #1c4d6b;border-radius:50%;box-sizing:border-box"></div>
<div style="left:663.8px;top:989.6px;width:5px;height:5.2px;border:1.7px solid #1c4d6b;border-radius:50%;box-sizing:border-box"></div>
<div style="left:738.3px;top:989.6px;width:5px;height:5.2px;border:1.7px solid #1c4d6b;border-radius:50%;box-sizing:border-box"></div>
<div style="left:822.8px;top:989.6px;width:5px;height:5.2px;border:1.7px solid #1c4d6b;border-radius:50%;box-sizing:border-box"></div>
<div style="left:1020.8px;top:989.6px;width:5px;height:5.2px;border:1.7px solid #1c4d6b;border-radius:50%;box-sizing:border-box"></div>
<div style="left:1105.8px;top:989.6px;width:5px;height:5.2px;border:1.7px solid #1c4d6b;border-radius:50%;box-sizing:border-box"></div>
<div style="left:1173.8px;top:989.6px;width:5px;height:5.2px;border:1.7px solid #1c4d6b;border-radius:50%;box-sizing:border-box"></div>
<div style="left:1231.8px;top:989.6px;width:5px;height:5.2px;border:1.7px solid #1c4d6b;border-radius:50%;box-sizing:border-box"></div>
<div style="left:1301.3px;top:989.6px;width:5px;height:5.2px;border:1.7px solid #1c4d6b;border-radius:50%;box-sizing:border-box"></div>
<div style="left:1366.3px;top:989.6px;width:5px;height:5.2px;border:1.7px solid #1c4d6b;border-radius:50%;box-sizing:border-box"></div>
<div style="left:1412.3px;top:989.6px;width:5px;height:5.2px;border:1.7px solid #1c4d6b;border-radius:50%;box-sizing:border-box"></div>
<div style="left:1479.8px;top:989.6px;width:5px;height:5.2px;border:1.7px solid #1c4d6b;border-radius:50%;box-sizing:border-box"></div>
<div style="left:1564.8px;top:989.6px;width:5px;height:5.2px;border:1.7px solid #1c4d6b;border-radius:50%;box-sizing:border-box"></div>
<div style="left:1633.3px;top:989.6px;width:5px;height:5.2px;border:1.7px solid #1c4d6b;border-radius:50%;box-sizing:border-box"></div>
<div style="left:1691.8px;top:989.6px;width:5px;height:5.2px;border:1.7px solid #1c4d6b;border-radius:50%;box-sizing:border-box"></div>
<div style="left:1723px;top:980px;width:43px;height:24px;color:#1c4d6b;line-height:17px;box-sizing:border-box;overflow:hidden;text-align:center;padding-top:5px;-webkit-text-stroke:0.3px #1c4d6b;display:flex;flex-direction:column;align-items:center"><span class="f c">مجموعه</span></div>
<div style="left:1766px;top:980px;width:118px;height:24px;color:#1c4d6b;line-height:17px;box-sizing:border-box;overflow:hidden;text-align:right;padding:5px 3px 0 0;-webkit-text-stroke:0.2px #1c4d6b"><span class="f">مجموعه داشبورد</span></div>
<div style="left:35px;top:1004px;width:1850px;height:24px;background:#efefef"></div>
<div style="left:202px;top:1004px;width:78px;height:24px;background:#fde29e"></div>
<div style="left:403px;top:1004px;width:95px;height:24px;background:#fde29e"></div>
<div style="left:498px;top:1004px;width:79px;height:24px;background:#fde29e"></div>
<div style="left:577px;top:1004px;width:60px;height:24px;background:#fde29e"></div>
<div style="left:637px;top:1004px;width:58px;height:24px;background:#fde29e"></div>
<div style="left:786px;top:1004px;width:78px;height:24px;background:#fde29e"></div>
<div style="left:977px;top:1004px;width:92px;height:24px;background:#fde29e"></div>
<div style="left:1069px;top:1004px;width:78px;height:24px;background:#fde29e"></div>
<div style="left:1147px;top:1004px;width:58px;height:24px;background:#fde29e"></div>
<div style="left:1205px;top:1004px;width:58px;height:24px;background:#fde29e"></div>
<div style="left:1528px;top:1004px;width:78px;height:24px;background:#fde29e"></div>
<div style="left:35px;top:1004px;width:75px;height:24px;color:#1c4d6b;line-height:17px;box-sizing:border-box;overflow:hidden;text-align:right;padding:5px 1px 0 0;-webkit-text-stroke:0.3px #1c4d6b"><span class="f">تولید</span></div>
<div style="left:110px;top:1004px;width:92px;height:24px;color:#1c4d6b;line-height:17px;box-sizing:border-box;overflow:hidden;text-align:center;padding-top:4px;font-size:12px;-webkit-text-stroke:0.2px #1c4d6b;letter-spacing:0.80px;display:flex;justify-content:center">924,608</div>
<div style="left:202px;top:1004px;width:78px;height:24px;color:#1c4d6b;line-height:17px;box-sizing:border-box;overflow:hidden;text-align:center;padding-top:4px;font-size:12px;-webkit-text-stroke:0.2px #1c4d6b;letter-spacing:0.80px;display:flex;justify-content:center">724,349</div>
<div style="left:280px;top:1004px;width:64px;height:24px;color:#1c4d6b;line-height:17px;box-sizing:border-box;overflow:hidden;text-align:center;padding-top:4px;font-size:12px;-webkit-text-stroke:0.2px #1c4d6b;letter-spacing:0.74px;display:flex;justify-content:center">1,276,467</div>
<div style="left:344px;top:1004px;width:59px;height:24px;color:#1c4d6b;line-height:17px;box-sizing:border-box;overflow:hidden;text-align:center;padding-top:4px;font-size:12px;-webkit-text-stroke:0.2px #1c4d6b;letter-spacing:0.18px;display:flex;justify-content:center">1,194,343</div>
<div style="left:403px;top:1004px;width:95px;height:24px;color:#1c4d6b;line-height:17px;box-sizing:border-box;overflow:hidden;text-align:center;padding-top:4px;font-size:12px;-webkit-text-stroke:0.2px #1c4d6b;letter-spacing:0.80px;display:flex;justify-content:center">4,818,690</div>
<div style="left:498px;top:1004px;width:79px;height:24px;color:#1c4d6b;line-height:17px;box-sizing:border-box;overflow:hidden;text-align:center;padding-top:4px;font-size:12px;-webkit-text-stroke:0.2px #1c4d6b;letter-spacing:0.80px;display:flex;justify-content:center">6,551,450</div>
<div style="left:577px;top:1004px;width:60px;height:24px;color:#1c4d6b;line-height:17px;box-sizing:border-box;overflow:hidden;text-align:center;padding-top:4px;font-size:12px;-webkit-text-stroke:0.2px #1c4d6b;letter-spacing:0.80px;display:flex;justify-content:center">735,515</div>
<div style="left:637px;top:1004px;width:58px;height:24px;color:#1c4d6b;line-height:17px;box-sizing:border-box;overflow:hidden;text-align:center;padding-top:4px;font-size:12px;-webkit-text-stroke:0.2px #1c4d6b;letter-spacing:0.80px;display:flex;justify-content:center">846,676</div>
<div style="left:695px;top:1004px;width:91px;height:24px;color:#1c4d6b;line-height:17px;box-sizing:border-box;overflow:hidden;text-align:center;padding-top:4px;font-size:12px;-webkit-text-stroke:0.2px #1c4d6b;letter-spacing:0.80px;display:flex;justify-content:center">1,594,262</div>
<div style="left:786px;top:1004px;width:78px;height:24px;color:#1c4d6b;line-height:17px;box-sizing:border-box;overflow:hidden;text-align:center;padding-top:4px;font-size:12px;-webkit-text-stroke:0.2px #1c4d6b;letter-spacing:0.80px;display:flex;justify-content:center">12,676,213</div>
<div style="left:864px;top:1004px;width:58px;height:24px;color:#1c4d6b;line-height:17px;box-sizing:border-box;overflow:hidden;text-align:center;padding-top:4px;font-size:12px;-webkit-text-stroke:0.2px #1c4d6b;letter-spacing:0.80px;display:flex;justify-content:center">125,768</div>
<div style="left:922px;top:1004px;width:55px;height:24px;color:#1c4d6b;line-height:17px;box-sizing:border-box;overflow:hidden;text-align:center;padding-top:4px;font-size:12px;-webkit-text-stroke:0.2px #1c4d6b;letter-spacing:0.80px;display:flex;justify-content:center">129,185</div>
<div style="left:977px;top:1004px;width:92px;height:24px;color:#1c4d6b;line-height:17px;box-sizing:border-box;overflow:hidden;text-align:center;padding-top:4px;font-size:12px;-webkit-text-stroke:0.2px #1c4d6b;letter-spacing:0.80px;display:flex;justify-content:center">3,224,428</div>
<div style="left:1069px;top:1004px;width:78px;height:24px;color:#1c4d6b;line-height:17px;box-sizing:border-box;overflow:hidden;text-align:center;padding-top:4px;font-size:12px;-webkit-text-stroke:0.2px #1c4d6b;letter-spacing:0.80px;display:flex;justify-content:center">5,288,141</div>
<div style="left:1147px;top:1004px;width:58px;height:24px;color:#1c4d6b;line-height:17px;box-sizing:border-box;overflow:hidden;text-align:center;padding-top:4px;font-size:12px;-webkit-text-stroke:0.2px #1c4d6b;letter-spacing:0.80px;display:flex;justify-content:center">609,747</div>
<div style="left:1205px;top:1004px;width:58px;height:24px;color:#1c4d6b;line-height:17px;box-sizing:border-box;overflow:hidden;text-align:center;padding-top:4px;font-size:12px;-webkit-text-stroke:0.2px #1c4d6b;letter-spacing:0.80px;display:flex;justify-content:center">717,491</div>
<div style="left:1301.3px;top:1013.6px;width:5px;height:5.2px;border:1.7px solid #1c4d6b;border-radius:50%;box-sizing:border-box"></div>
<div style="left:1366.3px;top:1013.6px;width:5px;height:5.2px;border:1.7px solid #1c4d6b;border-radius:50%;box-sizing:border-box"></div>
<div style="left:1412.3px;top:1013.6px;width:5px;height:5.2px;border:1.7px solid #1c4d6b;border-radius:50%;box-sizing:border-box"></div>
<div style="left:1436px;top:1004px;width:92px;height:24px;color:#1c4d6b;line-height:17px;box-sizing:border-box;overflow:hidden;text-align:center;padding-top:4px;font-size:12px;-webkit-text-stroke:0.2px #1c4d6b;letter-spacing:0.80px;display:flex;justify-content:center">3,224,428</div>
<div style="left:1528px;top:1004px;width:78px;height:24px;color:#1c4d6b;line-height:17px;box-sizing:border-box;overflow:hidden;text-align:center;padding-top:4px;font-size:12px;-webkit-text-stroke:0.2px #1c4d6b;letter-spacing:0.80px;display:flex;justify-content:center">5,288,141</div>
<div style="left:1606px;top:1004px;width:59px;height:24px;color:#1c4d6b;line-height:17px;box-sizing:border-box;overflow:hidden;text-align:center;padding-top:4px;font-size:12px;-webkit-text-stroke:0.2px #1c4d6b;letter-spacing:0.80px;display:flex;justify-content:center">609,747</div>
<div style="left:1665px;top:1004px;width:58px;height:24px;color:#1c4d6b;line-height:17px;box-sizing:border-box;overflow:hidden;text-align:center;padding-top:4px;font-size:12px;-webkit-text-stroke:0.2px #1c4d6b;letter-spacing:0.80px;display:flex;justify-content:center">717,491</div>
<div style="left:1723px;top:1004px;width:43px;height:24px;color:#1c4d6b;line-height:17px;box-sizing:border-box;overflow:hidden;text-align:center;padding-top:5px;-webkit-text-stroke:0.3px #1c4d6b;display:flex;flex-direction:column;align-items:center"><span class="f c">مجموعه</span></div>
<div style="left:1766px;top:1004px;width:118px;height:24px;color:#1c4d6b;line-height:17px;box-sizing:border-box;overflow:hidden;text-align:right;padding:5px 3px 0 0;-webkit-text-stroke:0.2px #1c4d6b"><span class="f">سایر</span></div>
<div style="left:35px;top:1028px;width:1850px;height:25px;background:#d1e4f5"></div>
<div style="left:202px;top:1028px;width:78px;height:25px;background:#fde29e"></div>
<div style="left:403px;top:1028px;width:95px;height:25px;background:#fde29e"></div>
<div style="left:498px;top:1028px;width:79px;height:25px;background:#fde29e"></div>
<div style="left:577px;top:1028px;width:60px;height:25px;background:#fde29e"></div>
<div style="left:637px;top:1028px;width:58px;height:25px;background:#fde29e"></div>
<div style="left:786px;top:1028px;width:78px;height:25px;background:#fde29e"></div>
<div style="left:977px;top:1028px;width:92px;height:25px;background:#fde29e"></div>
<div style="left:1069px;top:1028px;width:78px;height:25px;background:#fde29e"></div>
<div style="left:1147px;top:1028px;width:58px;height:25px;background:#fde29e"></div>
<div style="left:1205px;top:1028px;width:58px;height:25px;background:#fde29e"></div>
<div style="left:1528px;top:1028px;width:78px;height:25px;background:#fde29e"></div>
<div style="left:35px;top:1028px;width:75px;height:25px;color:#1c4d6b;line-height:17px;box-sizing:border-box;overflow:hidden;text-align:right;padding:5px 1px 0 0;-webkit-text-stroke:0.3px #1c4d6b"><span class="f">تولید</span></div>
<div style="left:110px;top:1028px;width:92px;height:25px;color:#1c4d6b;line-height:17px;box-sizing:border-box;overflow:hidden;text-align:center;padding-top:4px;font-size:12px;-webkit-text-stroke:0.2px #1c4d6b;letter-spacing:0.80px;display:flex;justify-content:center">641,997</div>
<div style="left:202px;top:1028px;width:78px;height:25px;color:#1c4d6b;line-height:17px;box-sizing:border-box;overflow:hidden;text-align:center;padding-top:4px;font-size:12px;-webkit-text-stroke:0.2px #1c4d6b;letter-spacing:0.80px;display:flex;justify-content:center">3,635,791</div>
<div style="left:280px;top:1028px;width:64px;height:25px;color:#1c4d6b;line-height:17px;box-sizing:border-box;overflow:hidden;text-align:center;padding-top:4px;font-size:12px;-webkit-text-stroke:0.2px #1c4d6b;letter-spacing:0.80px;display:flex;justify-content:center">176,577</div>
<div style="left:344px;top:1028px;width:59px;height:25px;color:#1c4d6b;line-height:17px;box-sizing:border-box;overflow:hidden;text-align:center;padding-top:4px;font-size:12px;-webkit-text-stroke:0.2px #1c4d6b;letter-spacing:0.80px;display:flex;justify-content:center">175,760</div>
<div style="left:403px;top:1028px;width:95px;height:25px;color:#1c4d6b;line-height:17px;box-sizing:border-box;overflow:hidden;text-align:center;padding-top:4px;font-size:12px;-webkit-text-stroke:0.2px #1c4d6b;letter-spacing:0.80px;display:flex;justify-content:center">915,710</div>
<div style="left:498px;top:1028px;width:79px;height:25px;color:#1c4d6b;line-height:17px;box-sizing:border-box;overflow:hidden;text-align:center;padding-top:4px;font-size:12px;-webkit-text-stroke:0.2px #1c4d6b;letter-spacing:0.80px;display:flex;justify-content:center">5,881,057</div>
<div style="left:577px;top:1028px;width:60px;height:25px;color:#1c4d6b;line-height:17px;box-sizing:border-box;overflow:hidden;text-align:center;padding-top:4px;font-size:12px;-webkit-text-stroke:0.2px #1c4d6b;letter-spacing:0.80px;display:flex;justify-content:center">155,705</div>
<div style="left:637px;top:1028px;width:58px;height:25px;color:#1c4d6b;line-height:17px;box-sizing:border-box;overflow:hidden;text-align:center;padding-top:4px;font-size:12px;-webkit-text-stroke:0.2px #1c4d6b;letter-spacing:0.80px;display:flex;justify-content:center">155,162</div>
<div style="left:695px;top:1028px;width:91px;height:25px;color:#1c4d6b;line-height:17px;box-sizing:border-box;overflow:hidden;text-align:center;padding-top:4px;font-size:12px;-webkit-text-stroke:0.2px #1c4d6b;letter-spacing:0.80px;display:flex;justify-content:center">168,404</div>
<div style="left:786px;top:1028px;width:78px;height:25px;color:#1c4d6b;line-height:17px;box-sizing:border-box;overflow:hidden;text-align:center;padding-top:4px;font-size:12px;-webkit-text-stroke:0.2px #1c4d6b;letter-spacing:0.80px;display:flex;justify-content:center">5,995,585</div>
<div style="left:864px;top:1028px;width:58px;height:25px;color:#1c4d6b;line-height:17px;box-sizing:border-box;overflow:hidden;text-align:center;padding-top:4px;font-size:12px;-webkit-text-stroke:0.2px #1c4d6b;letter-spacing:0.80px;display:flex;justify-content:center">28,088</div>
<div style="left:922px;top:1028px;width:55px;height:25px;color:#1c4d6b;line-height:17px;box-sizing:border-box;overflow:hidden;text-align:center;padding-top:4px;font-size:12px;-webkit-text-stroke:0.2px #1c4d6b;letter-spacing:0.80px;display:flex;justify-content:center">27,874</div>
<div style="left:977px;top:1028px;width:92px;height:25px;color:#1c4d6b;line-height:17px;box-sizing:border-box;overflow:hidden;text-align:center;padding-top:4px;font-size:12px;-webkit-text-stroke:0.2px #1c4d6b;letter-spacing:0.80px;display:flex;justify-content:center">747,306</div>
<div style="left:1069px;top:1028px;width:78px;height:25px;color:#1c4d6b;line-height:17px;box-sizing:border-box;overflow:hidden;text-align:center;padding-top:4px;font-size:12px;-webkit-text-stroke:0.2px #1c4d6b;letter-spacing:0.80px;display:flex;justify-content:center">5,855,850</div>
<div style="left:1147px;top:1028px;width:58px;height:25px;color:#1c4d6b;line-height:17px;box-sizing:border-box;overflow:hidden;text-align:center;padding-top:4px;font-size:12px;-webkit-text-stroke:0.2px #1c4d6b;letter-spacing:0.80px;display:flex;justify-content:center">127,617</div>
<div style="left:1205px;top:1028px;width:58px;height:25px;color:#1c4d6b;line-height:17px;box-sizing:border-box;overflow:hidden;text-align:center;padding-top:4px;font-size:12px;-webkit-text-stroke:0.2px #1c4d6b;letter-spacing:0.80px;display:flex;justify-content:center">127,288</div>
<div style="left:1301.3px;top:1037.6px;width:5px;height:5.2px;border:1.7px solid #1c4d6b;border-radius:50%;box-sizing:border-box"></div>
<div style="left:1366.3px;top:1037.6px;width:5px;height:5.2px;border:1.7px solid #1c4d6b;border-radius:50%;box-sizing:border-box"></div>
<div style="left:1412.3px;top:1037.6px;width:5px;height:5.2px;border:1.7px solid #1c4d6b;border-radius:50%;box-sizing:border-box"></div>
<div style="left:1436px;top:1028px;width:92px;height:25px;color:#1c4d6b;line-height:17px;box-sizing:border-box;overflow:hidden;text-align:center;padding-top:4px;font-size:12px;-webkit-text-stroke:0.2px #1c4d6b;letter-spacing:0.80px;display:flex;justify-content:center">747,306</div>
<div style="left:1528px;top:1028px;width:78px;height:25px;color:#1c4d6b;line-height:17px;box-sizing:border-box;overflow:hidden;text-align:center;padding-top:4px;font-size:12px;-webkit-text-stroke:0.2px #1c4d6b;letter-spacing:0.80px;display:flex;justify-content:center">5,855,850</div>
<div style="left:1606px;top:1028px;width:59px;height:25px;color:#1c4d6b;line-height:17px;box-sizing:border-box;overflow:hidden;text-align:center;padding-top:4px;font-size:12px;-webkit-text-stroke:0.2px #1c4d6b;letter-spacing:0.80px;display:flex;justify-content:center">127,617</div>
<div style="left:1665px;top:1028px;width:58px;height:25px;color:#1c4d6b;line-height:17px;box-sizing:border-box;overflow:hidden;text-align:center;padding-top:4px;font-size:12px;-webkit-text-stroke:0.2px #1c4d6b;letter-spacing:0.80px;display:flex;justify-content:center">127,288</div>
<div style="left:1723px;top:1028px;width:43px;height:25px;color:#1c4d6b;line-height:17px;box-sizing:border-box;overflow:hidden;text-align:center;padding-top:5px;-webkit-text-stroke:0.3px #1c4d6b;display:flex;flex-direction:column;align-items:center"><span class="f c">مجموعه</span></div>
<div style="left:1766px;top:1028px;width:118px;height:25px;color:#1c4d6b;line-height:17px;box-sizing:border-box;overflow:hidden;text-align:right;padding:5px 3px 0 0;-webkit-text-stroke:0.2px #1c4d6b"><span class="f">انواع کلید هاي فرمان</span></div>
<div style="left:35px;top:1053px;width:1850px;height:24px;background:#efefef"></div>
<div style="left:202px;top:1053px;width:78px;height:24px;background:#fde29e"></div>
<div style="left:403px;top:1053px;width:95px;height:24px;background:#fde29e"></div>
<div style="left:498px;top:1053px;width:79px;height:24px;background:#fde29e"></div>
<div style="left:577px;top:1053px;width:60px;height:24px;background:#fde29e"></div>
<div style="left:637px;top:1053px;width:58px;height:24px;background:#fde29e"></div>
<div style="left:786px;top:1053px;width:78px;height:24px;background:#fde29e"></div>
<div style="left:977px;top:1053px;width:92px;height:24px;background:#fde29e"></div>
<div style="left:1069px;top:1053px;width:78px;height:24px;background:#fde29e"></div>
<div style="left:1147px;top:1053px;width:58px;height:24px;background:#fde29e"></div>
<div style="left:1205px;top:1053px;width:58px;height:24px;background:#fde29e"></div>
<div style="left:1528px;top:1053px;width:78px;height:24px;background:#fde29e"></div>
<div style="left:35px;top:1053px;width:75px;height:24px;color:#1c4d6b;line-height:17px;box-sizing:border-box;overflow:hidden;text-align:right;padding:5px 1px 0 0;-webkit-text-stroke:0.3px #1c4d6b"><span class="f">تولید</span></div>
<div style="left:110px;top:1053px;width:92px;height:24px;color:#1c4d6b;line-height:17px;box-sizing:border-box;overflow:hidden;text-align:center;padding-top:4px;font-size:12px;-webkit-text-stroke:0.2px #1c4d6b;letter-spacing:0.80px;display:flex;justify-content:center">7,222</div>
<div style="left:202px;top:1053px;width:78px;height:24px;color:#1c4d6b;line-height:17px;box-sizing:border-box;overflow:hidden;text-align:center;padding-top:4px;font-size:12px;-webkit-text-stroke:0.2px #1c4d6b;letter-spacing:0.80px;display:flex;justify-content:center">10,843,844</div>
<div style="left:280px;top:1053px;width:64px;height:24px;color:#1c4d6b;line-height:17px;box-sizing:border-box;overflow:hidden;text-align:center;padding-top:4px;font-size:12px;-webkit-text-stroke:0.2px #1c4d6b;letter-spacing:0.80px;display:flex;justify-content:center">666</div>
<div style="left:371.3px;top:1062.6px;width:5px;height:5.2px;border:1.7px solid #1c4d6b;border-radius:50%;box-sizing:border-box"></div>
<div style="left:403px;top:1053px;width:95px;height:24px;color:#1c4d6b;line-height:17px;box-sizing:border-box;overflow:hidden;text-align:center;padding-top:4px;font-size:12px;-webkit-text-stroke:0.2px #1c4d6b;letter-spacing:0.80px;display:flex;justify-content:center">119,839</div>
<div style="left:498px;top:1053px;width:79px;height:24px;color:#1c4d6b;line-height:17px;box-sizing:border-box;overflow:hidden;text-align:center;padding-top:4px;font-size:12px;-webkit-text-stroke:0.2px #1c4d6b;letter-spacing:0.80px;display:flex;justify-content:center">38,620,367</div>
<div style="left:577px;top:1053px;width:60px;height:24px;color:#1c4d6b;line-height:17px;box-sizing:border-box;overflow:hidden;text-align:center;padding-top:4px;font-size:12px;-webkit-text-stroke:0.2px #1c4d6b;letter-spacing:0.80px;display:flex;justify-content:center">3,103</div>
<div style="left:637px;top:1053px;width:58px;height:24px;color:#1c4d6b;line-height:17px;box-sizing:border-box;overflow:hidden;text-align:center;padding-top:4px;font-size:12px;-webkit-text-stroke:0.2px #1c4d6b;letter-spacing:0.80px;display:flex;justify-content:center">3,101</div>
<div style="left:695px;top:1053px;width:91px;height:24px;color:#1c4d6b;line-height:17px;box-sizing:border-box;overflow:hidden;text-align:center;padding-top:4px;font-size:12px;-webkit-text-stroke:0.2px #1c4d6b;letter-spacing:0.80px;display:flex;justify-content:center">48,510</div>
<div style="left:786px;top:1053px;width:78px;height:24px;color:#1c4d6b;line-height:17px;box-sizing:border-box;overflow:hidden;text-align:center;padding-top:4px;font-size:12px;-webkit-text-stroke:0.2px #1c4d6b;letter-spacing:0.80px;display:flex;justify-content:center">38,500,000</div>
<div style="left:864px;top:1053px;width:58px;height:24px;color:#1c4d6b;line-height:17px;box-sizing:border-box;overflow:hidden;text-align:center;padding-top:4px;font-size:12px;-webkit-text-stroke:0.2px #1c4d6b;letter-spacing:0.80px;display:flex;justify-content:center">1,260</div>
<div style="left:922px;top:1053px;width:55px;height:24px;color:#1c4d6b;line-height:17px;box-sizing:border-box;overflow:hidden;text-align:center;padding-top:4px;font-size:12px;-webkit-text-stroke:0.2px #1c4d6b;letter-spacing:0.80px;display:flex;justify-content:center">1,262</div>
<div style="left:977px;top:1053px;width:92px;height:24px;color:#1c4d6b;line-height:17px;box-sizing:border-box;overflow:hidden;text-align:center;padding-top:4px;font-size:12px;-webkit-text-stroke:0.2px #1c4d6b;letter-spacing:0.80px;display:flex;justify-content:center">71,329</div>
<div style="left:1069px;top:1053px;width:78px;height:24px;color:#1c4d6b;line-height:17px;box-sizing:border-box;overflow:hidden;text-align:center;padding-top:4px;font-size:12px;-webkit-text-stroke:0.2px #1c4d6b;letter-spacing:0.80px;display:flex;justify-content:center">38,702,659</div>
<div style="left:1147px;top:1053px;width:58px;height:24px;color:#1c4d6b;line-height:17px;box-sizing:border-box;overflow:hidden;text-align:center;padding-top:4px;font-size:12px;-webkit-text-stroke:0.2px #1c4d6b;letter-spacing:0.80px;display:flex;justify-content:center">1,843</div>
<div style="left:1205px;top:1053px;width:58px;height:24px;color:#1c4d6b;line-height:17px;box-sizing:border-box;overflow:hidden;text-align:center;padding-top:4px;font-size:12px;-webkit-text-stroke:0.2px #1c4d6b;letter-spacing:0.80px;display:flex;justify-content:center">1,839</div>
<div style="left:1301.3px;top:1062.6px;width:5px;height:5.2px;border:1.7px solid #1c4d6b;border-radius:50%;box-sizing:border-box"></div>
<div style="left:1366.3px;top:1062.6px;width:5px;height:5.2px;border:1.7px solid #1c4d6b;border-radius:50%;box-sizing:border-box"></div>
<div style="left:1412.3px;top:1062.6px;width:5px;height:5.2px;border:1.7px solid #1c4d6b;border-radius:50%;box-sizing:border-box"></div>
<div style="left:1436px;top:1053px;width:92px;height:24px;color:#1c4d6b;line-height:17px;box-sizing:border-box;overflow:hidden;text-align:center;padding-top:4px;font-size:12px;-webkit-text-stroke:0.2px #1c4d6b;letter-spacing:0.80px;display:flex;justify-content:center">71,329</div>
<div style="left:1528px;top:1053px;width:78px;height:24px;color:#1c4d6b;line-height:17px;box-sizing:border-box;overflow:hidden;text-align:center;padding-top:4px;font-size:12px;-webkit-text-stroke:0.2px #1c4d6b;letter-spacing:0.80px;display:flex;justify-content:center">38,702,659</div>
<div style="left:1606px;top:1053px;width:59px;height:24px;color:#1c4d6b;line-height:17px;box-sizing:border-box;overflow:hidden;text-align:center;padding-top:4px;font-size:12px;-webkit-text-stroke:0.2px #1c4d6b;letter-spacing:0.80px;display:flex;justify-content:center">1,843</div>
<div style="left:1665px;top:1053px;width:58px;height:24px;color:#1c4d6b;line-height:17px;box-sizing:border-box;overflow:hidden;text-align:center;padding-top:4px;font-size:12px;-webkit-text-stroke:0.2px #1c4d6b;letter-spacing:0.80px;display:flex;justify-content:center">1,839</div>
<div style="left:1723px;top:1053px;width:43px;height:24px;color:#1c4d6b;line-height:17px;box-sizing:border-box;overflow:hidden;text-align:center;padding-top:5px;-webkit-text-stroke:0.3px #1c4d6b;display:flex;flex-direction:column;align-items:center"><span class="f c">مجموعه</span></div>
<div style="left:1766px;top:1053px;width:118px;height:24px;color:#1c4d6b;line-height:17px;box-sizing:border-box;overflow:hidden;text-align:right;padding:5px 3px 0 0;-webkit-text-stroke:0.2px #1c4d6b"><span class="f">شیر سرمخزن CNG</span></div>
<div style="left:35px;top:1077px;width:1850px;height:3px;background:#fde29e"></div>
<div style="left:35px;top:459px;width:1850px;height:1px;background:rgba(0,0,0,0.2)"></div>
<div style="left:35px;top:501px;width:1850px;height:1px;background:rgba(0,0,0,0.2)"></div>
<div style="left:35px;top:525px;width:1850px;height:1px;background:rgba(0,0,0,0.2)"></div>
<div style="left:35px;top:549px;width:1850px;height:1px;background:rgba(0,0,0,0.2)"></div>
<div style="left:35px;top:590px;width:1850px;height:1px;background:rgba(0,0,0,0.2)"></div>
<div style="left:35px;top:614px;width:1850px;height:1px;background:rgba(0,0,0,0.2)"></div>
<div style="left:35px;top:638px;width:1850px;height:1px;background:rgba(0,0,0,0.2)"></div>
<div style="left:35px;top:663px;width:1850px;height:1px;background:rgba(0,0,0,0.2)"></div>
<div style="left:35px;top:687px;width:1850px;height:1px;background:rgba(0,0,0,0.2)"></div>
<div style="left:35px;top:728px;width:1850px;height:1px;background:rgba(0,0,0,0.2)"></div>
<div style="left:35px;top:752px;width:1850px;height:1px;background:rgba(0,0,0,0.2)"></div>
<div style="left:35px;top:776px;width:1850px;height:1px;background:rgba(0,0,0,0.2)"></div>
<div style="left:35px;top:800px;width:1850px;height:1px;background:rgba(0,0,0,0.2)"></div>
<div style="left:35px;top:825px;width:1850px;height:1px;background:rgba(0,0,0,0.2)"></div>
<div style="left:35px;top:849px;width:1850px;height:1px;background:rgba(0,0,0,0.2)"></div>
<div style="left:35px;top:890px;width:1850px;height:1px;background:rgba(0,0,0,0.2)"></div>
<div style="left:35px;top:931px;width:1850px;height:1px;background:rgba(0,0,0,0.2)"></div>
<div style="left:35px;top:955px;width:1850px;height:1px;background:rgba(0,0,0,0.2)"></div>
<div style="left:35px;top:980px;width:1850px;height:1px;background:rgba(0,0,0,0.2)"></div>
<div style="left:35px;top:1004px;width:1850px;height:1px;background:rgba(0,0,0,0.2)"></div>
<div style="left:35px;top:1028px;width:1850px;height:1px;background:rgba(0,0,0,0.2)"></div>
<div style="left:35px;top:1053px;width:1850px;height:1px;background:rgba(0,0,0,0.2)"></div>
<div style="left:35px;top:1077px;width:1850px;height:1px;background:rgba(0,0,0,0.2)"></div>
<div style="left:35px;top:435px;width:1px;height:645px;background:rgba(0,0,0,0.2)"></div>
<div style="left:110px;top:435px;width:1px;height:645px;background:rgba(0,0,0,0.2)"></div>
<div style="left:202px;top:435px;width:1px;height:645px;background:rgba(0,0,0,0.2)"></div>
<div style="left:280px;top:435px;width:1px;height:645px;background:rgba(0,0,0,0.2)"></div>
<div style="left:344px;top:435px;width:1px;height:645px;background:rgba(0,0,0,0.2)"></div>
<div style="left:403px;top:435px;width:1px;height:645px;background:rgba(0,0,0,0.2)"></div>
<div style="left:498px;top:435px;width:1px;height:645px;background:rgba(0,0,0,0.2)"></div>
<div style="left:577px;top:435px;width:1px;height:645px;background:rgba(0,0,0,0.2)"></div>
<div style="left:637px;top:435px;width:1px;height:645px;background:rgba(0,0,0,0.2)"></div>
<div style="left:695px;top:435px;width:1px;height:645px;background:rgba(0,0,0,0.2)"></div>
<div style="left:786px;top:435px;width:1px;height:645px;background:rgba(0,0,0,0.2)"></div>
<div style="left:864px;top:435px;width:1px;height:645px;background:rgba(0,0,0,0.2)"></div>
<div style="left:922px;top:435px;width:1px;height:645px;background:rgba(0,0,0,0.2)"></div>
<div style="left:977px;top:435px;width:1px;height:645px;background:rgba(0,0,0,0.2)"></div>
<div style="left:1069px;top:435px;width:1px;height:645px;background:rgba(0,0,0,0.2)"></div>
<div style="left:1147px;top:435px;width:1px;height:645px;background:rgba(0,0,0,0.2)"></div>
<div style="left:1205px;top:435px;width:1px;height:645px;background:rgba(0,0,0,0.2)"></div>
<div style="left:1263px;top:435px;width:1px;height:645px;background:rgba(0,0,0,0.2)"></div>
<div style="left:1344px;top:435px;width:1px;height:645px;background:rgba(0,0,0,0.2)"></div>
<div style="left:1393px;top:435px;width:1px;height:645px;background:rgba(0,0,0,0.2)"></div>
<div style="left:1436px;top:435px;width:1px;height:645px;background:rgba(0,0,0,0.2)"></div>
<div style="left:1528px;top:435px;width:1px;height:645px;background:rgba(0,0,0,0.2)"></div>
<div style="left:1606px;top:435px;width:1px;height:645px;background:rgba(0,0,0,0.2)"></div>
<div style="left:1665px;top:435px;width:1px;height:645px;background:rgba(0,0,0,0.2)"></div>
<div style="left:1723px;top:435px;width:1px;height:645px;background:rgba(0,0,0,0.2)"></div>
<div style="left:1766px;top:435px;width:1px;height:645px;background:rgba(0,0,0,0.2)"></div>
<div style="left:1884px;top:435px;width:1px;height:645px;background:rgba(0,0,0,0.2)"></div>
<div style="left:953px;top:537px;width:0;height:0;direction:ltr"><div style="left:-340px;top:-60px;width:680px;height:120px;transform:rotate(-45.5deg);text-align:center;font-size:98px;font-weight:bold;line-height:120px;color:rgba(120,120,120,0.09)">@codal360.ir</div></div>
</div>
<script>(function(){var W=[69, 120, 88, 62, 131, 154, 136, 100, 214, 190, 316, 212, 67, 148, 38, 65, 195.1, 195.1, 174.7, 259.8, 42, 195.1, 25, 57.3, 66.3, 55.3, 30, 23, 34, 49.3, 57.3, 66.3, 55.3, 30, 23, 34, 23, 23, 57.3, 66.3, 55.3, 30, 23, 34, 23, 23, 57.3, 66.3, 55.3, 30, 23, 34, 49.3, 57.3, 66.3, 23, 34, 23, 23, 57.3, 66.3, 55.3, 30, 23, 34, 49.3, 22, 56.3, 70.3, 23, 40, 100.7, 59.3, 23, 40, 101.7, 23, 40, 60.3, 23, 40, 114.7, 55.7, 23, 40, 35, 23, 40, 83.3, 23, 40, 112.7, 23, 40, 89.7, 23, 40, 74, 59, 23, 40, 40.3, 23, 40, 86.3, 23, 40, 102.7, 23, 40, 70.7, 23, 40, 85.0, 23, 40, 102.7, 55.3, 23, 40, 111.7, 30, 23, 40, 76.7, 23, 36, 90.7, 23, 40, 82.3, 23, 40, 24, 23, 40, 103.0, 23, 40, 101.3];var e=document.querySelectorAll(".f");if(W.length!==e.length)return;for(var i=0;i<e.length;i++){var w=e[i].getBoundingClientRect().width;if(w>0&&W[i]>0){var s=W[i]/w;if(Math.abs(s-1)>0.02){s=Math.max(0.35,Math.min(2,s));e[i].style.transform="scaleX("+s.toFixed(3)+")";}}}})();</script>
</body></html>
